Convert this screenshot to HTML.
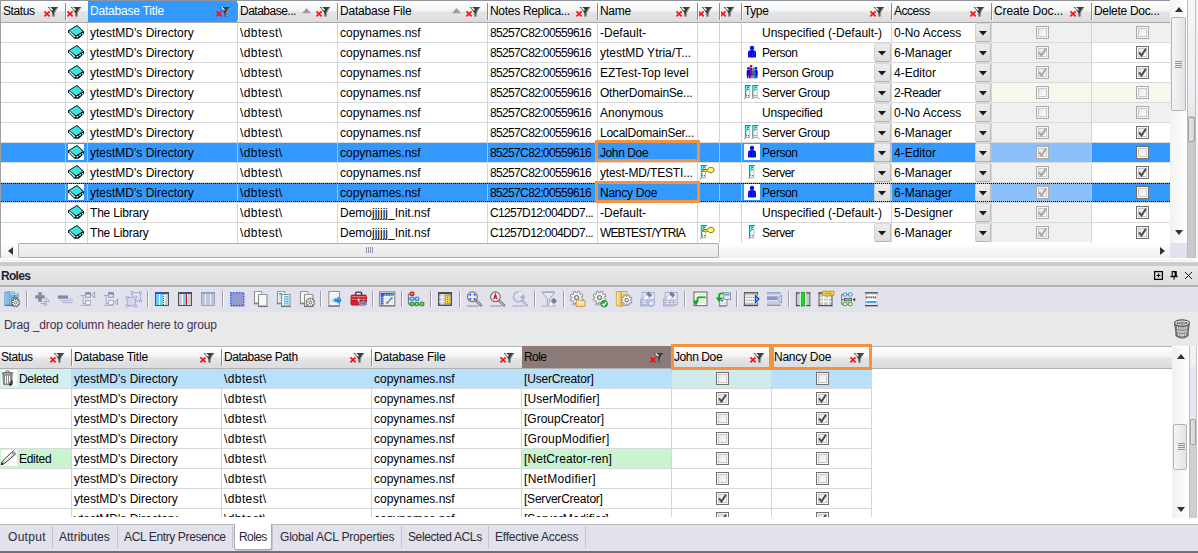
<!DOCTYPE html>
<html lang="en"><head><meta charset="utf-8"><title>Roles</title>
<style>
html,body{margin:0;padding:0}
body{width:1198px;height:553px;overflow:hidden;background:#fff;position:relative;font-family:"Liberation Sans",sans-serif;font-size:12px;color:#000;line-height:1}
div,span,svg{position:absolute;box-sizing:border-box}
svg{overflow:visible}
.t{white-space:pre;line-height:14px;height:14px}
.num{letter-spacing:-0.65px}
.hd{background:linear-gradient(#ffffff 0%,#f4f4f4 45%,#e4e4e6 55%,#dcdcde 100%)}
.vl{width:1px;background:#d6d6d6}
.hl{height:1px;background:#d9d9d9}
.hsep{width:1px;background:#8c8c8c}
.hsep2{width:1px;background:#fbfbfb}
.cb{width:13px;height:13px;border:1px solid #707070;background:#f6f6f6}
.cb i{position:absolute;box-sizing:border-box;left:1px;top:1px;width:9px;height:9px;border:1px solid #c9c9c9;background:linear-gradient(135deg,#e6e6e6,#fcfcfc)}
.dd{width:16px;background:linear-gradient(#ececec,#dcdcdc);border:1px solid;border-color:#d8d8d8 #bcbcbc #b4b4b4 #d0d0d0;border-radius:2px}
</style></head>
<body>
<div style="left:0px;top:0px;width:1170px;height:1px;background:#8f939b"></div>
<div class="hd" style="left:1px;top:1px;width:1169px;height:21px;"></div>
<div style="left:0px;top:22px;width:1170px;height:1px;background:#a9a9a9"></div>
<div style="left:88px;top:1px;width:149px;height:21px;background:#3399ff"></div>
<span class="t" style="left:3px;top:4px;letter-spacing:-0.4px;">Status</span>
<svg width="15" height="10" viewBox="0 0 15 10" style="left:44px;top:7px"><path d="M3.6 0H14.3L12.6 2.6L11.4 4.4L10.7 6.2L10.4 9.6H8.6L8.4 6.2L7.2 4.2L5.4 2Z" fill="#3c3c3c"/><path d="M13.4 0.6L11.2 4L10.2 6.4L10 9.2" stroke="#a8a8a8" stroke-width="0.9" fill="none"/><path d="M6 0.8L8 2.8" stroke="#fff" stroke-width="1.5" stroke-linecap="round"/><path d="M0.4 4.4L5.6 9.4M5.6 4.4L0.4 9.4" stroke="#ff0a0a" stroke-width="1.5"/></svg>
<svg width="15" height="10" viewBox="0 0 15 10" style="left:67px;top:7px"><path d="M3.6 0H14.3L12.6 2.6L11.4 4.4L10.7 6.2L10.4 9.6H8.6L8.4 6.2L7.2 4.2L5.4 2Z" fill="#3c3c3c"/><path d="M13.4 0.6L11.2 4L10.2 6.4L10 9.2" stroke="#a8a8a8" stroke-width="0.9" fill="none"/><path d="M6 0.8L8 2.8" stroke="#fff" stroke-width="1.5" stroke-linecap="round"/><path d="M0.4 4.4L5.6 9.4M5.6 4.4L0.4 9.4" stroke="#ff0a0a" stroke-width="1.5"/></svg>
<span class="t" style="left:90px;top:4px;color:#fff;letter-spacing:-0.2px;">Database Title</span>
<svg width="15" height="10" viewBox="0 0 15 10" style="left:216px;top:7px"><path d="M3.6 0H14.3L12.6 2.6L11.4 4.4L10.7 6.2L10.4 9.6H8.6L8.4 6.2L7.2 4.2L5.4 2Z" fill="#3c3c3c"/><path d="M13.4 0.6L11.2 4L10.2 6.4L10 9.2" stroke="#a8a8a8" stroke-width="0.9" fill="none"/><path d="M6 0.8L8 2.8" stroke="#fff" stroke-width="1.5" stroke-linecap="round"/><path d="M0.4 4.4L5.6 9.4M5.6 4.4L0.4 9.4" stroke="#ff0a0a" stroke-width="1.5"/></svg>
<span class="t" style="left:240px;top:4px;letter-spacing:-0.5px;">Database...</span>
<svg width="15" height="10" viewBox="0 0 15 10" style="left:316px;top:7px"><path d="M3.6 0H14.3L12.6 2.6L11.4 4.4L10.7 6.2L10.4 9.6H8.6L8.4 6.2L7.2 4.2L5.4 2Z" fill="#3c3c3c"/><path d="M13.4 0.6L11.2 4L10.2 6.4L10 9.2" stroke="#a8a8a8" stroke-width="0.9" fill="none"/><path d="M6 0.8L8 2.8" stroke="#fff" stroke-width="1.5" stroke-linecap="round"/><path d="M0.4 4.4L5.6 9.4M5.6 4.4L0.4 9.4" stroke="#ff0a0a" stroke-width="1.5"/></svg>
<svg width="9" height="5" viewBox="0 0 9 5" style="left:302px;top:8px"><path d="M0 5.2L4.5 0L9 5.2Z" fill="#9c9c9c"/></svg>
<span class="t" style="left:340px;top:4px;letter-spacing:-0.2px;">Database File</span>
<svg width="15" height="10" viewBox="0 0 15 10" style="left:466px;top:7px"><path d="M3.6 0H14.3L12.6 2.6L11.4 4.4L10.7 6.2L10.4 9.6H8.6L8.4 6.2L7.2 4.2L5.4 2Z" fill="#3c3c3c"/><path d="M13.4 0.6L11.2 4L10.2 6.4L10 9.2" stroke="#a8a8a8" stroke-width="0.9" fill="none"/><path d="M6 0.8L8 2.8" stroke="#fff" stroke-width="1.5" stroke-linecap="round"/><path d="M0.4 4.4L5.6 9.4M5.6 4.4L0.4 9.4" stroke="#ff0a0a" stroke-width="1.5"/></svg>
<svg width="9" height="5" viewBox="0 0 9 5" style="left:452px;top:8px"><path d="M0 5.2L4.5 0L9 5.2Z" fill="#9c9c9c"/></svg>
<span class="t" style="left:490px;top:4px;letter-spacing:-0.3px;">Notes Replica...</span>
<svg width="15" height="10" viewBox="0 0 15 10" style="left:576px;top:7px"><path d="M3.6 0H14.3L12.6 2.6L11.4 4.4L10.7 6.2L10.4 9.6H8.6L8.4 6.2L7.2 4.2L5.4 2Z" fill="#3c3c3c"/><path d="M13.4 0.6L11.2 4L10.2 6.4L10 9.2" stroke="#a8a8a8" stroke-width="0.9" fill="none"/><path d="M6 0.8L8 2.8" stroke="#fff" stroke-width="1.5" stroke-linecap="round"/><path d="M0.4 4.4L5.6 9.4M5.6 4.4L0.4 9.4" stroke="#ff0a0a" stroke-width="1.5"/></svg>
<span class="t" style="left:600px;top:4px;letter-spacing:-0.3px;">Name</span>
<svg width="15" height="10" viewBox="0 0 15 10" style="left:676px;top:7px"><path d="M3.6 0H14.3L12.6 2.6L11.4 4.4L10.7 6.2L10.4 9.6H8.6L8.4 6.2L7.2 4.2L5.4 2Z" fill="#3c3c3c"/><path d="M13.4 0.6L11.2 4L10.2 6.4L10 9.2" stroke="#a8a8a8" stroke-width="0.9" fill="none"/><path d="M6 0.8L8 2.8" stroke="#fff" stroke-width="1.5" stroke-linecap="round"/><path d="M0.4 4.4L5.6 9.4M5.6 4.4L0.4 9.4" stroke="#ff0a0a" stroke-width="1.5"/></svg>
<svg width="15" height="10" viewBox="0 0 15 10" style="left:698px;top:7px"><path d="M3.6 0H14.3L12.6 2.6L11.4 4.4L10.7 6.2L10.4 9.6H8.6L8.4 6.2L7.2 4.2L5.4 2Z" fill="#3c3c3c"/><path d="M13.4 0.6L11.2 4L10.2 6.4L10 9.2" stroke="#a8a8a8" stroke-width="0.9" fill="none"/><path d="M6 0.8L8 2.8" stroke="#fff" stroke-width="1.5" stroke-linecap="round"/><path d="M0.4 4.4L5.6 9.4M5.6 4.4L0.4 9.4" stroke="#ff0a0a" stroke-width="1.5"/></svg>
<svg width="15" height="10" viewBox="0 0 15 10" style="left:720px;top:7px"><path d="M3.6 0H14.3L12.6 2.6L11.4 4.4L10.7 6.2L10.4 9.6H8.6L8.4 6.2L7.2 4.2L5.4 2Z" fill="#3c3c3c"/><path d="M13.4 0.6L11.2 4L10.2 6.4L10 9.2" stroke="#a8a8a8" stroke-width="0.9" fill="none"/><path d="M6 0.8L8 2.8" stroke="#fff" stroke-width="1.5" stroke-linecap="round"/><path d="M0.4 4.4L5.6 9.4M5.6 4.4L0.4 9.4" stroke="#ff0a0a" stroke-width="1.5"/></svg>
<span class="t" style="left:744px;top:4px;letter-spacing:-0.4px;">Type</span>
<svg width="15" height="10" viewBox="0 0 15 10" style="left:870px;top:7px"><path d="M3.6 0H14.3L12.6 2.6L11.4 4.4L10.7 6.2L10.4 9.6H8.6L8.4 6.2L7.2 4.2L5.4 2Z" fill="#3c3c3c"/><path d="M13.4 0.6L11.2 4L10.2 6.4L10 9.2" stroke="#a8a8a8" stroke-width="0.9" fill="none"/><path d="M6 0.8L8 2.8" stroke="#fff" stroke-width="1.5" stroke-linecap="round"/><path d="M0.4 4.4L5.6 9.4M5.6 4.4L0.4 9.4" stroke="#ff0a0a" stroke-width="1.5"/></svg>
<span class="t" style="left:894px;top:4px;letter-spacing:-0.5px;">Access</span>
<svg width="15" height="10" viewBox="0 0 15 10" style="left:970px;top:7px"><path d="M3.6 0H14.3L12.6 2.6L11.4 4.4L10.7 6.2L10.4 9.6H8.6L8.4 6.2L7.2 4.2L5.4 2Z" fill="#3c3c3c"/><path d="M13.4 0.6L11.2 4L10.2 6.4L10 9.2" stroke="#a8a8a8" stroke-width="0.9" fill="none"/><path d="M6 0.8L8 2.8" stroke="#fff" stroke-width="1.5" stroke-linecap="round"/><path d="M0.4 4.4L5.6 9.4M5.6 4.4L0.4 9.4" stroke="#ff0a0a" stroke-width="1.5"/></svg>
<span class="t" style="left:994px;top:4px;letter-spacing:-0.13px;">Create Doc...</span>
<svg width="15" height="10" viewBox="0 0 15 10" style="left:1070px;top:7px"><path d="M3.6 0H14.3L12.6 2.6L11.4 4.4L10.7 6.2L10.4 9.6H8.6L8.4 6.2L7.2 4.2L5.4 2Z" fill="#3c3c3c"/><path d="M13.4 0.6L11.2 4L10.2 6.4L10 9.2" stroke="#a8a8a8" stroke-width="0.9" fill="none"/><path d="M6 0.8L8 2.8" stroke="#fff" stroke-width="1.5" stroke-linecap="round"/><path d="M0.4 4.4L5.6 9.4M5.6 4.4L0.4 9.4" stroke="#ff0a0a" stroke-width="1.5"/></svg>
<span class="t" style="left:1094px;top:4px;letter-spacing:-0.3px;">Delete Doc...</span>
<div class="hsep" style="left:65px;top:3px;width:1px;height:17px;"></div>
<div class="hsep2" style="left:66px;top:3px;width:1px;height:17px;"></div>
<div class="hsep" style="left:337px;top:3px;width:1px;height:17px;"></div>
<div class="hsep2" style="left:338px;top:3px;width:1px;height:17px;"></div>
<div class="hsep" style="left:487px;top:3px;width:1px;height:17px;"></div>
<div class="hsep2" style="left:488px;top:3px;width:1px;height:17px;"></div>
<div class="hsep" style="left:597px;top:3px;width:1px;height:17px;"></div>
<div class="hsep2" style="left:598px;top:3px;width:1px;height:17px;"></div>
<div class="hsep" style="left:697px;top:3px;width:1px;height:17px;"></div>
<div class="hsep2" style="left:698px;top:3px;width:1px;height:17px;"></div>
<div class="hsep" style="left:719px;top:3px;width:1px;height:17px;"></div>
<div class="hsep2" style="left:720px;top:3px;width:1px;height:17px;"></div>
<div class="hsep" style="left:741px;top:3px;width:1px;height:17px;"></div>
<div class="hsep2" style="left:742px;top:3px;width:1px;height:17px;"></div>
<div class="hsep" style="left:891px;top:3px;width:1px;height:17px;"></div>
<div class="hsep2" style="left:892px;top:3px;width:1px;height:17px;"></div>
<div class="hsep" style="left:991px;top:3px;width:1px;height:17px;"></div>
<div class="hsep2" style="left:992px;top:3px;width:1px;height:17px;"></div>
<div class="hsep" style="left:1091px;top:3px;width:1px;height:17px;"></div>
<div class="hsep2" style="left:1092px;top:3px;width:1px;height:17px;"></div>
<div class="hsep" style="left:237px;top:3px;width:1px;height:17px;"></div>
<div class="hsep2" style="left:238px;top:3px;width:1px;height:17px;"></div>
<div style="left:992px;top:23px;width:99px;height:19px;background:#f0f0f0"></div>
<div style="left:1092px;top:23px;width:78px;height:19px;background:#f0f0f0"></div>
<div class="hl" style="left:1px;top:42px;width:1169px;height:1px;"></div>
<svg width="16" height="16" viewBox="0 0 16 16" style="left:68px;top:24px"><path d="M0 6.5L9.1 1L16 7.6V9.8L10.6 14.7H6.4L0 8.3Z" fill="#000"/><path d="M1.4 6.4L9 2.1L14.8 7.6L7.9 11.5Z" fill="#36e2e2"/><path d="M3 6.5h.8M5 5.5h.8M7 4.5h.8M9 3.6h.8M5 7.5h.8M7 6.5h.8M9 5.5h.8M11 4.9h.8M7 8.5h.8M9 7.5h.8M11 6.7h.8M13 7.5h.8M9 9.5h.8M11 8.6h.8" stroke="#8fcaca" stroke-width="0.8"/><path d="M1.1 7.5L7.2 12.9" stroke="#fff" stroke-width="1.1"/><path d="M0.9 8.5L6.7 13.8" stroke="#10e8e8" stroke-width="0.9"/><path d="M8.7 13L15.1 9.2" stroke="#fff" stroke-width="1.3" stroke-dasharray="1.9 1.1"/><path d="M8.3 14.1L10 13.2M14.2 10.6L15.4 9.8" stroke="#10d8d8" stroke-width="0.8"/></svg>
<span class="t" style="left:90px;top:26px;">ytestMD's Directory</span>
<span class="t" style="left:240px;top:26px;letter-spacing:0.4px;">\dbtest\</span>
<span class="t" style="left:340px;top:26px;">copynames.nsf</span>
<span class="t num" style="left:490px;top:26px;">85257C82:00559616</span>
<span class="t" style="left:600px;top:26px;">-Default-</span>
<span class="t" style="left:762px;top:26px;">Unspecified (-Default-)</span>
<span class="t" style="left:894px;top:26px;">0-No Access</span>
<div class="dd" style="left:975px;top:23px;height:19px;width:16px"><svg width="8" height="4" viewBox="0 0 8 4" style="left:3px;top:7px"><path d="M0 0H8L4 4.4Z" fill="#1a1a1a"/></svg></div>
<div class="cb" style="left:1036px;top:26px;border-color:#a9a9a9;"><i></i></div>
<div class="cb" style="left:1136px;top:26px;border-color:#a9a9a9;"><i></i></div>
<div style="left:992px;top:43px;width:99px;height:19px;background:#f0f0f0"></div>
<div class="hl" style="left:1px;top:62px;width:1169px;height:1px;"></div>
<svg width="16" height="16" viewBox="0 0 16 16" style="left:68px;top:44px"><path d="M0 6.5L9.1 1L16 7.6V9.8L10.6 14.7H6.4L0 8.3Z" fill="#000"/><path d="M1.4 6.4L9 2.1L14.8 7.6L7.9 11.5Z" fill="#36e2e2"/><path d="M3 6.5h.8M5 5.5h.8M7 4.5h.8M9 3.6h.8M5 7.5h.8M7 6.5h.8M9 5.5h.8M11 4.9h.8M7 8.5h.8M9 7.5h.8M11 6.7h.8M13 7.5h.8M9 9.5h.8M11 8.6h.8" stroke="#8fcaca" stroke-width="0.8"/><path d="M1.1 7.5L7.2 12.9" stroke="#fff" stroke-width="1.1"/><path d="M0.9 8.5L6.7 13.8" stroke="#10e8e8" stroke-width="0.9"/><path d="M8.7 13L15.1 9.2" stroke="#fff" stroke-width="1.3" stroke-dasharray="1.9 1.1"/><path d="M8.3 14.1L10 13.2M14.2 10.6L15.4 9.8" stroke="#10d8d8" stroke-width="0.8"/></svg>
<span class="t" style="left:90px;top:46px;">ytestMD's Directory</span>
<span class="t" style="left:240px;top:46px;letter-spacing:0.4px;">\dbtest\</span>
<span class="t" style="left:340px;top:46px;">copynames.nsf</span>
<span class="t num" style="left:490px;top:46px;">85257C82:00559616</span>
<span class="t" style="left:600px;top:46px;">ytestMD Ytria/T...</span>
<svg width="16" height="16" viewBox="0 0 16 16" style="left:744px;top:44px"><circle cx="8" cy="3.9" r="2.2" fill="#0808e6"/><path d="M4 8.6Q4 6.3 6.4 6.3H9.6Q12 6.3 12 8.6V12.4Q12 13.6 10.8 13.6H5.2Q4 13.6 4 12.4Z" fill="#0808e6"/><rect x="7" y="5.4" width="2" height="1.4" fill="#0808e6"/><path d="M4.8 8.5h.8M4.8 10.5h.8M4.8 12.5h.8M8 9.5h.8M10 8.5h.8M10 10.5h.8M10 12.5h.8M8 11.5h.8" stroke="#2f6fd0" stroke-width="0.8"/></svg>
<span class="t" style="left:762px;top:46px;letter-spacing:-0.4px;">Person</span>
<div class="dd" style="left:874px;top:43px;height:19px;width:17px"><svg width="8" height="4" viewBox="0 0 8 4" style="left:3px;top:7px"><path d="M0 0H8L4 4.4Z" fill="#1a1a1a"/></svg></div>
<span class="t" style="left:894px;top:46px;">6-Manager</span>
<div class="dd" style="left:975px;top:43px;height:19px;width:16px"><svg width="8" height="4" viewBox="0 0 8 4" style="left:3px;top:7px"><path d="M0 0H8L4 4.4Z" fill="#1a1a1a"/></svg></div>
<div class="cb" style="left:1036px;top:46px;border-color:#a9a9a9;"><i></i><svg width="13" height="13" viewBox="0 0 13 13" style="left:-1px;top:-1px"><path d="M3.1 6.4 L5.5 9.5 L9.9 2.7" fill="none" stroke="#a2a2a2" stroke-width="2"/></svg></div>
<div class="cb" style="left:1136px;top:46px;"><i></i><svg width="13" height="13" viewBox="0 0 13 13" style="left:-1px;top:-1px"><path d="M3.1 6.4 L5.5 9.5 L9.9 2.7" fill="none" stroke="#4a4a4a" stroke-width="2"/></svg></div>
<div style="left:992px;top:63px;width:99px;height:19px;background:#f0f0f0"></div>
<div class="hl" style="left:1px;top:82px;width:1169px;height:1px;"></div>
<svg width="16" height="16" viewBox="0 0 16 16" style="left:68px;top:64px"><path d="M0 6.5L9.1 1L16 7.6V9.8L10.6 14.7H6.4L0 8.3Z" fill="#000"/><path d="M1.4 6.4L9 2.1L14.8 7.6L7.9 11.5Z" fill="#36e2e2"/><path d="M3 6.5h.8M5 5.5h.8M7 4.5h.8M9 3.6h.8M5 7.5h.8M7 6.5h.8M9 5.5h.8M11 4.9h.8M7 8.5h.8M9 7.5h.8M11 6.7h.8M13 7.5h.8M9 9.5h.8M11 8.6h.8" stroke="#8fcaca" stroke-width="0.8"/><path d="M1.1 7.5L7.2 12.9" stroke="#fff" stroke-width="1.1"/><path d="M0.9 8.5L6.7 13.8" stroke="#10e8e8" stroke-width="0.9"/><path d="M8.7 13L15.1 9.2" stroke="#fff" stroke-width="1.3" stroke-dasharray="1.9 1.1"/><path d="M8.3 14.1L10 13.2M14.2 10.6L15.4 9.8" stroke="#10d8d8" stroke-width="0.8"/></svg>
<span class="t" style="left:90px;top:66px;">ytestMD's Directory</span>
<span class="t" style="left:240px;top:66px;letter-spacing:0.4px;">\dbtest\</span>
<span class="t" style="left:340px;top:66px;">copynames.nsf</span>
<span class="t num" style="left:490px;top:66px;">85257C82:00559616</span>
<span class="t" style="left:600px;top:66px;">EZTest-Top level</span>
<svg width="16" height="16" viewBox="0 0 16 16" style="left:744px;top:64px"><circle cx="4.5" cy="4.3" r="1.3" fill="#0a0ae0"/><path d="M2.7 7.6Q2.7 5.6 4.5 5.6Q6.3 5.6 6.3 7.6V10.799999999999999L5.8999999999999995 14.2H4.8V11.6H4.2V14.2H3.1L2.7 10.799999999999999Z" fill="#0a0ae0"/><circle cx="12" cy="4.3" r="1.3" fill="#0a0ae0"/><path d="M10.3 7.6Q10.3 5.6 12 5.6Q13.7 5.6 13.7 7.6V10.799999999999999L13.299999999999999 14.2H12.3V11.6H11.7V14.2H10.700000000000001L10.3 10.799999999999999Z" fill="#0a0ae0"/><circle cx="9.9" cy="4.7" r="1.3" fill="#088a8a"/><path d="M8.3 8.0Q8.3 6.0 9.9 6.0Q11.5 6.0 11.5 8.0V11.2L11.1 14.6H10.200000000000001V12.0H9.6V14.6H8.700000000000001L8.3 11.2Z" fill="#088a8a"/><circle cx="7.1" cy="2.3" r="1.3" fill="#8a0a8a"/><path d="M5.6 5.6Q5.6 3.6 7.1 3.6Q8.6 3.6 8.6 5.6V11.2L8.2 14.6H7.3999999999999995V12.0H6.8V14.6H6.0L5.6 11.2Z" fill="#8a0a8a"/><path d="M9.6 5.2h1" stroke="#20f0f0" stroke-width="1"/><path d="M12.4 12v1.6" stroke="#2a2aff" stroke-width="0.9"/></svg>
<span class="t" style="left:762px;top:66px;letter-spacing:-0.27px;">Person Group</span>
<div class="dd" style="left:874px;top:63px;height:19px;width:17px"><svg width="8" height="4" viewBox="0 0 8 4" style="left:3px;top:7px"><path d="M0 0H8L4 4.4Z" fill="#1a1a1a"/></svg></div>
<span class="t" style="left:894px;top:66px;">4-Editor</span>
<div class="dd" style="left:975px;top:63px;height:19px;width:16px"><svg width="8" height="4" viewBox="0 0 8 4" style="left:3px;top:7px"><path d="M0 0H8L4 4.4Z" fill="#1a1a1a"/></svg></div>
<div class="cb" style="left:1036px;top:66px;border-color:#a9a9a9;"><i></i><svg width="13" height="13" viewBox="0 0 13 13" style="left:-1px;top:-1px"><path d="M3.1 6.4 L5.5 9.5 L9.9 2.7" fill="none" stroke="#a2a2a2" stroke-width="2"/></svg></div>
<div class="cb" style="left:1136px;top:66px;"><i></i><svg width="13" height="13" viewBox="0 0 13 13" style="left:-1px;top:-1px"><path d="M3.1 6.4 L5.5 9.5 L9.9 2.7" fill="none" stroke="#4a4a4a" stroke-width="2"/></svg></div>
<div style="left:992px;top:83px;width:99px;height:19px;background:#f7f7ee"></div>
<div style="left:1092px;top:83px;width:78px;height:19px;background:#f7f7ee"></div>
<div class="hl" style="left:1px;top:102px;width:1169px;height:1px;"></div>
<svg width="16" height="16" viewBox="0 0 16 16" style="left:68px;top:84px"><path d="M0 6.5L9.1 1L16 7.6V9.8L10.6 14.7H6.4L0 8.3Z" fill="#000"/><path d="M1.4 6.4L9 2.1L14.8 7.6L7.9 11.5Z" fill="#36e2e2"/><path d="M3 6.5h.8M5 5.5h.8M7 4.5h.8M9 3.6h.8M5 7.5h.8M7 6.5h.8M9 5.5h.8M11 4.9h.8M7 8.5h.8M9 7.5h.8M11 6.7h.8M13 7.5h.8M9 9.5h.8M11 8.6h.8" stroke="#8fcaca" stroke-width="0.8"/><path d="M1.1 7.5L7.2 12.9" stroke="#fff" stroke-width="1.1"/><path d="M0.9 8.5L6.7 13.8" stroke="#10e8e8" stroke-width="0.9"/><path d="M8.7 13L15.1 9.2" stroke="#fff" stroke-width="1.3" stroke-dasharray="1.9 1.1"/><path d="M8.3 14.1L10 13.2M14.2 10.6L15.4 9.8" stroke="#10d8d8" stroke-width="0.8"/></svg>
<span class="t" style="left:90px;top:86px;">ytestMD's Directory</span>
<span class="t" style="left:240px;top:86px;letter-spacing:0.4px;">\dbtest\</span>
<span class="t" style="left:340px;top:86px;">copynames.nsf</span>
<span class="t num" style="left:490px;top:86px;">85257C82:00559616</span>
<span class="t" style="left:600px;top:86px;letter-spacing:-0.23px;">OtherDomainSe...</span>
<svg width="16" height="16" viewBox="0 0 16 16" style="left:744px;top:84px"><rect x="1.4" y="1.7000000000000002" width="4.4" height="11.9" fill="#fff"/><path d="M1.4 1.7000000000000002V13.7" stroke="#6a6a6a" stroke-width="1"/><path d="M5.800000000000001 2.7V13.7" stroke="#b4b4b4" stroke-width="0.9"/><path d="M0.9 1.6H6.9" stroke="#0a8686" stroke-width="1"/><path d="M1.9 2.1H6.1000000000000005L5.1000000000000005 3.1H1.9Z" fill="#1ee8e8"/><path d="M2.9 3.6H5.1000000000000005M2.9 5.6H5.1000000000000005" stroke="#0a8080" stroke-width="1"/><path d="M1.9 4.6H4.1000000000000005M1.9 6.6H3.5M1.9 7.6H3.1M1.9 9.6H3.1" stroke="#22e6e6" stroke-width="1"/><path d="M2.1 11.6H3.1M4.1000000000000005 11.6H5.1000000000000005" stroke="#0a8080" stroke-width="1.2"/><path d="M1.3 13.7H5.9" stroke="#9a9a9a" stroke-width="0.9"/><rect x="0.30000000000000004" y="14.1" width="0.9" height="0.9" fill="#555"/><rect x="8.8" y="1.7000000000000002" width="4.4" height="11.9" fill="#fff"/><path d="M8.8 1.7000000000000002V13.7" stroke="#6a6a6a" stroke-width="1"/><path d="M13.200000000000001 2.7V13.7" stroke="#b4b4b4" stroke-width="0.9"/><path d="M8.3 1.6H14.3" stroke="#0a8686" stroke-width="1"/><path d="M9.3 2.1H13.5L12.5 3.1H9.3Z" fill="#1ee8e8"/><path d="M10.3 3.6H12.5M10.3 5.6H12.5" stroke="#0a8080" stroke-width="1"/><path d="M9.3 4.6H11.5M9.3 6.6H10.9M9.3 7.6H10.5M9.3 9.6H10.5" stroke="#22e6e6" stroke-width="1"/><path d="M9.5 11.6H10.5M11.5 11.6H12.5" stroke="#0a8080" stroke-width="1.2"/><path d="M8.700000000000001 13.7H13.3" stroke="#9a9a9a" stroke-width="0.9"/><rect x="7.700000000000001" y="14.1" width="0.9" height="0.9" fill="#555"/><rect x="14.2" y="14.1" width="0.9" height="0.9" fill="#555"/></svg>
<span class="t" style="left:762px;top:86px;letter-spacing:-0.37px;">Server Group</span>
<div class="dd" style="left:874px;top:83px;height:19px;width:17px"><svg width="8" height="4" viewBox="0 0 8 4" style="left:3px;top:7px"><path d="M0 0H8L4 4.4Z" fill="#1a1a1a"/></svg></div>
<span class="t" style="left:894px;top:86px;letter-spacing:-0.4px;">2-Reader</span>
<div class="dd" style="left:975px;top:83px;height:19px;width:16px"><svg width="8" height="4" viewBox="0 0 8 4" style="left:3px;top:7px"><path d="M0 0H8L4 4.4Z" fill="#1a1a1a"/></svg></div>
<div class="cb" style="left:1036px;top:86px;border-color:#a9a9a9;"><i></i></div>
<div class="cb" style="left:1136px;top:86px;border-color:#a9a9a9;"><i></i></div>
<div style="left:992px;top:103px;width:99px;height:19px;background:#f0f0f0"></div>
<div style="left:1092px;top:103px;width:78px;height:19px;background:#f0f0f0"></div>
<div class="hl" style="left:1px;top:122px;width:1169px;height:1px;"></div>
<svg width="16" height="16" viewBox="0 0 16 16" style="left:68px;top:104px"><path d="M0 6.5L9.1 1L16 7.6V9.8L10.6 14.7H6.4L0 8.3Z" fill="#000"/><path d="M1.4 6.4L9 2.1L14.8 7.6L7.9 11.5Z" fill="#36e2e2"/><path d="M3 6.5h.8M5 5.5h.8M7 4.5h.8M9 3.6h.8M5 7.5h.8M7 6.5h.8M9 5.5h.8M11 4.9h.8M7 8.5h.8M9 7.5h.8M11 6.7h.8M13 7.5h.8M9 9.5h.8M11 8.6h.8" stroke="#8fcaca" stroke-width="0.8"/><path d="M1.1 7.5L7.2 12.9" stroke="#fff" stroke-width="1.1"/><path d="M0.9 8.5L6.7 13.8" stroke="#10e8e8" stroke-width="0.9"/><path d="M8.7 13L15.1 9.2" stroke="#fff" stroke-width="1.3" stroke-dasharray="1.9 1.1"/><path d="M8.3 14.1L10 13.2M14.2 10.6L15.4 9.8" stroke="#10d8d8" stroke-width="0.8"/></svg>
<span class="t" style="left:90px;top:106px;">ytestMD's Directory</span>
<span class="t" style="left:240px;top:106px;letter-spacing:0.4px;">\dbtest\</span>
<span class="t" style="left:340px;top:106px;">copynames.nsf</span>
<span class="t num" style="left:490px;top:106px;">85257C82:00559616</span>
<span class="t" style="left:600px;top:106px;">Anonymous</span>
<span class="t" style="left:762px;top:106px;letter-spacing:-0.2px;">Unspecified</span>
<div class="dd" style="left:874px;top:103px;height:19px;width:17px"><svg width="8" height="4" viewBox="0 0 8 4" style="left:3px;top:7px"><path d="M0 0H8L4 4.4Z" fill="#1a1a1a"/></svg></div>
<span class="t" style="left:894px;top:106px;">0-No Access</span>
<div class="dd" style="left:975px;top:103px;height:19px;width:16px"><svg width="8" height="4" viewBox="0 0 8 4" style="left:3px;top:7px"><path d="M0 0H8L4 4.4Z" fill="#1a1a1a"/></svg></div>
<div class="cb" style="left:1036px;top:106px;border-color:#a9a9a9;"><i></i></div>
<div class="cb" style="left:1136px;top:106px;border-color:#a9a9a9;"><i></i></div>
<div style="left:992px;top:123px;width:99px;height:19px;background:#f0f0f0"></div>
<div class="hl" style="left:1px;top:142px;width:1169px;height:1px;"></div>
<svg width="16" height="16" viewBox="0 0 16 16" style="left:68px;top:124px"><path d="M0 6.5L9.1 1L16 7.6V9.8L10.6 14.7H6.4L0 8.3Z" fill="#000"/><path d="M1.4 6.4L9 2.1L14.8 7.6L7.9 11.5Z" fill="#36e2e2"/><path d="M3 6.5h.8M5 5.5h.8M7 4.5h.8M9 3.6h.8M5 7.5h.8M7 6.5h.8M9 5.5h.8M11 4.9h.8M7 8.5h.8M9 7.5h.8M11 6.7h.8M13 7.5h.8M9 9.5h.8M11 8.6h.8" stroke="#8fcaca" stroke-width="0.8"/><path d="M1.1 7.5L7.2 12.9" stroke="#fff" stroke-width="1.1"/><path d="M0.9 8.5L6.7 13.8" stroke="#10e8e8" stroke-width="0.9"/><path d="M8.7 13L15.1 9.2" stroke="#fff" stroke-width="1.3" stroke-dasharray="1.9 1.1"/><path d="M8.3 14.1L10 13.2M14.2 10.6L15.4 9.8" stroke="#10d8d8" stroke-width="0.8"/></svg>
<span class="t" style="left:90px;top:126px;">ytestMD's Directory</span>
<span class="t" style="left:240px;top:126px;letter-spacing:0.4px;">\dbtest\</span>
<span class="t" style="left:340px;top:126px;">copynames.nsf</span>
<span class="t num" style="left:490px;top:126px;">85257C82:00559616</span>
<span class="t" style="left:600px;top:126px;letter-spacing:-0.24px;">LocalDomainSer...</span>
<svg width="16" height="16" viewBox="0 0 16 16" style="left:744px;top:124px"><rect x="1.4" y="1.7000000000000002" width="4.4" height="11.9" fill="#fff"/><path d="M1.4 1.7000000000000002V13.7" stroke="#6a6a6a" stroke-width="1"/><path d="M5.800000000000001 2.7V13.7" stroke="#b4b4b4" stroke-width="0.9"/><path d="M0.9 1.6H6.9" stroke="#0a8686" stroke-width="1"/><path d="M1.9 2.1H6.1000000000000005L5.1000000000000005 3.1H1.9Z" fill="#1ee8e8"/><path d="M2.9 3.6H5.1000000000000005M2.9 5.6H5.1000000000000005" stroke="#0a8080" stroke-width="1"/><path d="M1.9 4.6H4.1000000000000005M1.9 6.6H3.5M1.9 7.6H3.1M1.9 9.6H3.1" stroke="#22e6e6" stroke-width="1"/><path d="M2.1 11.6H3.1M4.1000000000000005 11.6H5.1000000000000005" stroke="#0a8080" stroke-width="1.2"/><path d="M1.3 13.7H5.9" stroke="#9a9a9a" stroke-width="0.9"/><rect x="0.30000000000000004" y="14.1" width="0.9" height="0.9" fill="#555"/><rect x="8.8" y="1.7000000000000002" width="4.4" height="11.9" fill="#fff"/><path d="M8.8 1.7000000000000002V13.7" stroke="#6a6a6a" stroke-width="1"/><path d="M13.200000000000001 2.7V13.7" stroke="#b4b4b4" stroke-width="0.9"/><path d="M8.3 1.6H14.3" stroke="#0a8686" stroke-width="1"/><path d="M9.3 2.1H13.5L12.5 3.1H9.3Z" fill="#1ee8e8"/><path d="M10.3 3.6H12.5M10.3 5.6H12.5" stroke="#0a8080" stroke-width="1"/><path d="M9.3 4.6H11.5M9.3 6.6H10.9M9.3 7.6H10.5M9.3 9.6H10.5" stroke="#22e6e6" stroke-width="1"/><path d="M9.5 11.6H10.5M11.5 11.6H12.5" stroke="#0a8080" stroke-width="1.2"/><path d="M8.700000000000001 13.7H13.3" stroke="#9a9a9a" stroke-width="0.9"/><rect x="7.700000000000001" y="14.1" width="0.9" height="0.9" fill="#555"/><rect x="14.2" y="14.1" width="0.9" height="0.9" fill="#555"/></svg>
<span class="t" style="left:762px;top:126px;letter-spacing:-0.37px;">Server Group</span>
<div class="dd" style="left:874px;top:123px;height:19px;width:17px"><svg width="8" height="4" viewBox="0 0 8 4" style="left:3px;top:7px"><path d="M0 0H8L4 4.4Z" fill="#1a1a1a"/></svg></div>
<span class="t" style="left:894px;top:126px;">6-Manager</span>
<div class="dd" style="left:975px;top:123px;height:19px;width:16px"><svg width="8" height="4" viewBox="0 0 8 4" style="left:3px;top:7px"><path d="M0 0H8L4 4.4Z" fill="#1a1a1a"/></svg></div>
<div class="cb" style="left:1036px;top:126px;border-color:#a9a9a9;"><i></i><svg width="13" height="13" viewBox="0 0 13 13" style="left:-1px;top:-1px"><path d="M3.1 6.4 L5.5 9.5 L9.9 2.7" fill="none" stroke="#a2a2a2" stroke-width="2"/></svg></div>
<div class="cb" style="left:1136px;top:126px;"><i></i><svg width="13" height="13" viewBox="0 0 13 13" style="left:-1px;top:-1px"><path d="M3.1 6.4 L5.5 9.5 L9.9 2.7" fill="none" stroke="#4a4a4a" stroke-width="2"/></svg></div>
<div style="left:1px;top:143px;width:1169px;height:19px;background:#3399ff"></div>
<div style="left:992px;top:143px;width:99px;height:19px;background:#8cc0fb"></div>
<div class="hl" style="left:1px;top:162px;width:1169px;height:1px;"></div>
<div style="left:68px;top:144px;width:16px;height:16px;background:#fff"></div>
<svg width="16" height="16" viewBox="0 0 16 16" style="left:68px;top:144px"><path d="M0 6.5L9.1 1L16 7.6V9.8L10.6 14.7H6.4L0 8.3Z" fill="#000"/><path d="M1.4 6.4L9 2.1L14.8 7.6L7.9 11.5Z" fill="#36e2e2"/><path d="M3 6.5h.8M5 5.5h.8M7 4.5h.8M9 3.6h.8M5 7.5h.8M7 6.5h.8M9 5.5h.8M11 4.9h.8M7 8.5h.8M9 7.5h.8M11 6.7h.8M13 7.5h.8M9 9.5h.8M11 8.6h.8" stroke="#8fcaca" stroke-width="0.8"/><path d="M1.1 7.5L7.2 12.9" stroke="#fff" stroke-width="1.1"/><path d="M0.9 8.5L6.7 13.8" stroke="#10e8e8" stroke-width="0.9"/><path d="M8.7 13L15.1 9.2" stroke="#fff" stroke-width="1.3" stroke-dasharray="1.9 1.1"/><path d="M8.3 14.1L10 13.2M14.2 10.6L15.4 9.8" stroke="#10d8d8" stroke-width="0.8"/></svg>
<span class="t" style="left:90px;top:146px;">ytestMD's Directory</span>
<span class="t" style="left:240px;top:146px;letter-spacing:0.4px;">\dbtest\</span>
<span class="t" style="left:340px;top:146px;">copynames.nsf</span>
<span class="t num" style="left:490px;top:146px;">85257C82:00559616</span>
<span class="t" style="left:600px;top:146px;letter-spacing:-0.4px;">John Doe</span>
<div style="left:744px;top:144px;width:16px;height:16px;background:#fff"></div>
<svg width="16" height="16" viewBox="0 0 16 16" style="left:744px;top:144px"><circle cx="8" cy="3.9" r="2.2" fill="#0808e6"/><path d="M4 8.6Q4 6.3 6.4 6.3H9.6Q12 6.3 12 8.6V12.4Q12 13.6 10.8 13.6H5.2Q4 13.6 4 12.4Z" fill="#0808e6"/><rect x="7" y="5.4" width="2" height="1.4" fill="#0808e6"/><path d="M4.8 8.5h.8M4.8 10.5h.8M4.8 12.5h.8M8 9.5h.8M10 8.5h.8M10 10.5h.8M10 12.5h.8M8 11.5h.8" stroke="#2f6fd0" stroke-width="0.8"/></svg>
<span class="t" style="left:762px;top:146px;letter-spacing:-0.4px;">Person</span>
<div class="dd" style="left:874px;top:143px;height:19px;width:17px"><svg width="8" height="4" viewBox="0 0 8 4" style="left:3px;top:7px"><path d="M0 0H8L4 4.4Z" fill="#1a1a1a"/></svg></div>
<span class="t" style="left:894px;top:146px;">4-Editor</span>
<div class="dd" style="left:975px;top:143px;height:19px;width:16px"><svg width="8" height="4" viewBox="0 0 8 4" style="left:3px;top:7px"><path d="M0 0H8L4 4.4Z" fill="#1a1a1a"/></svg></div>
<div class="cb" style="left:1036px;top:146px;border-color:#a9a9a9;"><i></i><svg width="13" height="13" viewBox="0 0 13 13" style="left:-1px;top:-1px"><path d="M3.1 6.4 L5.5 9.5 L9.9 2.7" fill="none" stroke="#a2a2a2" stroke-width="2"/></svg></div>
<div class="cb" style="left:1136px;top:146px;"><i></i></div>
<div style="left:992px;top:163px;width:99px;height:19px;background:#f0f0f0"></div>
<div class="hl" style="left:1px;top:182px;width:1169px;height:1px;"></div>
<svg width="16" height="16" viewBox="0 0 16 16" style="left:68px;top:164px"><path d="M0 6.5L9.1 1L16 7.6V9.8L10.6 14.7H6.4L0 8.3Z" fill="#000"/><path d="M1.4 6.4L9 2.1L14.8 7.6L7.9 11.5Z" fill="#36e2e2"/><path d="M3 6.5h.8M5 5.5h.8M7 4.5h.8M9 3.6h.8M5 7.5h.8M7 6.5h.8M9 5.5h.8M11 4.9h.8M7 8.5h.8M9 7.5h.8M11 6.7h.8M13 7.5h.8M9 9.5h.8M11 8.6h.8" stroke="#8fcaca" stroke-width="0.8"/><path d="M1.1 7.5L7.2 12.9" stroke="#fff" stroke-width="1.1"/><path d="M0.9 8.5L6.7 13.8" stroke="#10e8e8" stroke-width="0.9"/><path d="M8.7 13L15.1 9.2" stroke="#fff" stroke-width="1.3" stroke-dasharray="1.9 1.1"/><path d="M8.3 14.1L10 13.2M14.2 10.6L15.4 9.8" stroke="#10d8d8" stroke-width="0.8"/></svg>
<span class="t" style="left:90px;top:166px;">ytestMD's Directory</span>
<span class="t" style="left:240px;top:166px;letter-spacing:0.4px;">\dbtest\</span>
<span class="t" style="left:340px;top:166px;">copynames.nsf</span>
<span class="t num" style="left:490px;top:166px;">85257C82:00559616</span>
<span class="t" style="left:600px;top:166px;letter-spacing:-0.15px;">ytest-MD/TESTI...</span>
<svg width="16" height="16" viewBox="0 0 16 16" style="left:700px;top:164px"><rect x="1.3" y="1.7000000000000002" width="4.4" height="11.9" fill="#fff"/><path d="M1.3 1.7000000000000002V13.7" stroke="#6a6a6a" stroke-width="1"/><path d="M5.7 2.7V13.7" stroke="#b4b4b4" stroke-width="0.9"/><path d="M0.8 1.6H6.8" stroke="#0a8686" stroke-width="1"/><path d="M1.8 2.1H6.0L5.0 3.1H1.8Z" fill="#1ee8e8"/><path d="M2.8 3.6H5.0M2.8 5.6H5.0" stroke="#0a8080" stroke-width="1"/><path d="M1.8 4.6H4.0M1.8 6.6H3.4000000000000004M1.8 7.6H3.0M1.8 9.6H3.0" stroke="#22e6e6" stroke-width="1"/><path d="M2.0 11.6H3.0M4.0 11.6H5.0" stroke="#0a8080" stroke-width="1.2"/><path d="M1.2000000000000002 13.7H5.8" stroke="#9a9a9a" stroke-width="0.9"/><rect x="0.20000000000000007" y="14.1" width="0.9" height="0.9" fill="#555"/><path d="M2.8 5.6H7.6Q8.2 3.4 10.8 3.2Q13.8 3.4 14.2 5.8Q13.8 8.6 11 8.8Q9 8.8 8.2 7.4H6.6L5.8 8.2L4.8 7.4H2.8Z" fill="#fdf32a" stroke="#8a5a12" stroke-width="0.9"/><path d="M9.4 4.6h1M11.4 4.6h1M10.4 6h1M12.4 6h1M9.4 7.4h1M11.4 7.4h1M8.4 6h1" stroke="#fffbd0" stroke-width="0.9"/></svg>
<svg width="16" height="16" viewBox="0 0 16 16" style="left:744px;top:164px"><rect x="5.5" y="1.7000000000000002" width="4.4" height="11.9" fill="#fff"/><path d="M5.5 1.7000000000000002V13.7" stroke="#6a6a6a" stroke-width="1"/><path d="M9.9 2.7V13.7" stroke="#b4b4b4" stroke-width="0.9"/><path d="M5 1.6H11" stroke="#0a8686" stroke-width="1"/><path d="M6 2.1H10.2L9.2 3.1H6Z" fill="#1ee8e8"/><path d="M7 3.6H9.2M7 5.6H9.2" stroke="#0a8080" stroke-width="1"/><path d="M6 4.6H8.2M6 6.6H7.6M6 7.6H7.2M6 9.6H7.2" stroke="#22e6e6" stroke-width="1"/><path d="M6.2 11.6H7.2M8.2 11.6H9.2" stroke="#0a8080" stroke-width="1.2"/><path d="M5.4 13.7H10" stroke="#9a9a9a" stroke-width="0.9"/><rect x="4.4" y="14.1" width="0.9" height="0.9" fill="#555"/></svg>
<span class="t" style="left:762px;top:166px;letter-spacing:-0.5px;">Server</span>
<div class="dd" style="left:874px;top:163px;height:19px;width:17px"><svg width="8" height="4" viewBox="0 0 8 4" style="left:3px;top:7px"><path d="M0 0H8L4 4.4Z" fill="#1a1a1a"/></svg></div>
<span class="t" style="left:894px;top:166px;">6-Manager</span>
<div class="dd" style="left:975px;top:163px;height:19px;width:16px"><svg width="8" height="4" viewBox="0 0 8 4" style="left:3px;top:7px"><path d="M0 0H8L4 4.4Z" fill="#1a1a1a"/></svg></div>
<div class="cb" style="left:1036px;top:166px;border-color:#a9a9a9;"><i></i><svg width="13" height="13" viewBox="0 0 13 13" style="left:-1px;top:-1px"><path d="M3.1 6.4 L5.5 9.5 L9.9 2.7" fill="none" stroke="#a2a2a2" stroke-width="2"/></svg></div>
<div class="cb" style="left:1136px;top:166px;"><i></i><svg width="13" height="13" viewBox="0 0 13 13" style="left:-1px;top:-1px"><path d="M3.1 6.4 L5.5 9.5 L9.9 2.7" fill="none" stroke="#4a4a4a" stroke-width="2"/></svg></div>
<div style="left:1px;top:183px;width:1169px;height:19px;background:#3399ff"></div>
<div style="left:992px;top:183px;width:99px;height:19px;background:#8cc0fb"></div>
<div class="hl" style="left:1px;top:202px;width:1169px;height:1px;"></div>
<div style="left:68px;top:184px;width:16px;height:16px;background:#fff"></div>
<svg width="16" height="16" viewBox="0 0 16 16" style="left:68px;top:184px"><path d="M0 6.5L9.1 1L16 7.6V9.8L10.6 14.7H6.4L0 8.3Z" fill="#000"/><path d="M1.4 6.4L9 2.1L14.8 7.6L7.9 11.5Z" fill="#36e2e2"/><path d="M3 6.5h.8M5 5.5h.8M7 4.5h.8M9 3.6h.8M5 7.5h.8M7 6.5h.8M9 5.5h.8M11 4.9h.8M7 8.5h.8M9 7.5h.8M11 6.7h.8M13 7.5h.8M9 9.5h.8M11 8.6h.8" stroke="#8fcaca" stroke-width="0.8"/><path d="M1.1 7.5L7.2 12.9" stroke="#fff" stroke-width="1.1"/><path d="M0.9 8.5L6.7 13.8" stroke="#10e8e8" stroke-width="0.9"/><path d="M8.7 13L15.1 9.2" stroke="#fff" stroke-width="1.3" stroke-dasharray="1.9 1.1"/><path d="M8.3 14.1L10 13.2M14.2 10.6L15.4 9.8" stroke="#10d8d8" stroke-width="0.8"/></svg>
<span class="t" style="left:90px;top:186px;">ytestMD's Directory</span>
<span class="t" style="left:240px;top:186px;letter-spacing:0.4px;">\dbtest\</span>
<span class="t" style="left:340px;top:186px;">copynames.nsf</span>
<span class="t num" style="left:490px;top:186px;">85257C82:00559616</span>
<span class="t" style="left:600px;top:186px;letter-spacing:-0.25px;">Nancy Doe</span>
<div style="left:744px;top:184px;width:16px;height:16px;background:#fff"></div>
<svg width="16" height="16" viewBox="0 0 16 16" style="left:744px;top:184px"><circle cx="8" cy="3.9" r="2.2" fill="#0808e6"/><path d="M4 8.6Q4 6.3 6.4 6.3H9.6Q12 6.3 12 8.6V12.4Q12 13.6 10.8 13.6H5.2Q4 13.6 4 12.4Z" fill="#0808e6"/><rect x="7" y="5.4" width="2" height="1.4" fill="#0808e6"/><path d="M4.8 8.5h.8M4.8 10.5h.8M4.8 12.5h.8M8 9.5h.8M10 8.5h.8M10 10.5h.8M10 12.5h.8M8 11.5h.8" stroke="#2f6fd0" stroke-width="0.8"/></svg>
<span class="t" style="left:762px;top:186px;letter-spacing:-0.4px;">Person</span>
<div class="dd" style="left:874px;top:183px;height:19px;width:17px"><svg width="8" height="4" viewBox="0 0 8 4" style="left:3px;top:7px"><path d="M0 0H8L4 4.4Z" fill="#1a1a1a"/></svg></div>
<span class="t" style="left:894px;top:186px;">6-Manager</span>
<div class="dd" style="left:975px;top:183px;height:19px;width:16px"><svg width="8" height="4" viewBox="0 0 8 4" style="left:3px;top:7px"><path d="M0 0H8L4 4.4Z" fill="#1a1a1a"/></svg></div>
<div class="cb" style="left:1036px;top:186px;border-color:#a9a9a9;"><i></i><svg width="13" height="13" viewBox="0 0 13 13" style="left:-1px;top:-1px"><path d="M3.1 6.4 L5.5 9.5 L9.9 2.7" fill="none" stroke="#a2a2a2" stroke-width="2"/></svg></div>
<div class="cb" style="left:1136px;top:186px;"><i></i></div>
<div style="left:992px;top:203px;width:99px;height:19px;background:#f0f0f0"></div>
<div class="hl" style="left:1px;top:222px;width:1169px;height:1px;"></div>
<svg width="16" height="16" viewBox="0 0 16 16" style="left:68px;top:204px"><path d="M0 6.5L9.1 1L16 7.6V9.8L10.6 14.7H6.4L0 8.3Z" fill="#000"/><path d="M1.4 6.4L9 2.1L14.8 7.6L7.9 11.5Z" fill="#36e2e2"/><path d="M3 6.5h.8M5 5.5h.8M7 4.5h.8M9 3.6h.8M5 7.5h.8M7 6.5h.8M9 5.5h.8M11 4.9h.8M7 8.5h.8M9 7.5h.8M11 6.7h.8M13 7.5h.8M9 9.5h.8M11 8.6h.8" stroke="#8fcaca" stroke-width="0.8"/><path d="M1.1 7.5L7.2 12.9" stroke="#fff" stroke-width="1.1"/><path d="M0.9 8.5L6.7 13.8" stroke="#10e8e8" stroke-width="0.9"/><path d="M8.7 13L15.1 9.2" stroke="#fff" stroke-width="1.3" stroke-dasharray="1.9 1.1"/><path d="M8.3 14.1L10 13.2M14.2 10.6L15.4 9.8" stroke="#10d8d8" stroke-width="0.8"/></svg>
<span class="t" style="left:90px;top:206px;letter-spacing:-0.2px;">The Library</span>
<span class="t" style="left:240px;top:206px;letter-spacing:0.4px;">\dbtest\</span>
<span class="t" style="left:340px;top:206px;">Demojjjjjj_Init.nsf</span>
<span class="t num" style="left:490px;top:206px;">C1257D12:004DD7...</span>
<span class="t" style="left:600px;top:206px;">-Default-</span>
<span class="t" style="left:762px;top:206px;">Unspecified (-Default-)</span>
<span class="t" style="left:894px;top:206px;">5-Designer</span>
<div class="dd" style="left:975px;top:203px;height:19px;width:16px"><svg width="8" height="4" viewBox="0 0 8 4" style="left:3px;top:7px"><path d="M0 0H8L4 4.4Z" fill="#1a1a1a"/></svg></div>
<div class="cb" style="left:1036px;top:206px;border-color:#a9a9a9;"><i></i><svg width="13" height="13" viewBox="0 0 13 13" style="left:-1px;top:-1px"><path d="M3.1 6.4 L5.5 9.5 L9.9 2.7" fill="none" stroke="#a2a2a2" stroke-width="2"/></svg></div>
<div class="cb" style="left:1136px;top:206px;"><i></i><svg width="13" height="13" viewBox="0 0 13 13" style="left:-1px;top:-1px"><path d="M3.1 6.4 L5.5 9.5 L9.9 2.7" fill="none" stroke="#4a4a4a" stroke-width="2"/></svg></div>
<div style="left:992px;top:223px;width:99px;height:19px;background:#f0f0f0"></div>
<svg width="16" height="16" viewBox="0 0 16 16" style="left:68px;top:224px"><path d="M0 6.5L9.1 1L16 7.6V9.8L10.6 14.7H6.4L0 8.3Z" fill="#000"/><path d="M1.4 6.4L9 2.1L14.8 7.6L7.9 11.5Z" fill="#36e2e2"/><path d="M3 6.5h.8M5 5.5h.8M7 4.5h.8M9 3.6h.8M5 7.5h.8M7 6.5h.8M9 5.5h.8M11 4.9h.8M7 8.5h.8M9 7.5h.8M11 6.7h.8M13 7.5h.8M9 9.5h.8M11 8.6h.8" stroke="#8fcaca" stroke-width="0.8"/><path d="M1.1 7.5L7.2 12.9" stroke="#fff" stroke-width="1.1"/><path d="M0.9 8.5L6.7 13.8" stroke="#10e8e8" stroke-width="0.9"/><path d="M8.7 13L15.1 9.2" stroke="#fff" stroke-width="1.3" stroke-dasharray="1.9 1.1"/><path d="M8.3 14.1L10 13.2M14.2 10.6L15.4 9.8" stroke="#10d8d8" stroke-width="0.8"/></svg>
<span class="t" style="left:90px;top:226px;letter-spacing:-0.2px;">The Library</span>
<span class="t" style="left:240px;top:226px;letter-spacing:0.4px;">\dbtest\</span>
<span class="t" style="left:340px;top:226px;">Demojjjjjj_Init.nsf</span>
<span class="t num" style="left:490px;top:226px;">C1257D12:004DD7...</span>
<span class="t" style="left:600px;top:226px;letter-spacing:-0.9px;">WEBTEST/YTRIA</span>
<svg width="16" height="16" viewBox="0 0 16 16" style="left:700px;top:224px"><rect x="1.3" y="1.7000000000000002" width="4.4" height="11.9" fill="#fff"/><path d="M1.3 1.7000000000000002V13.7" stroke="#6a6a6a" stroke-width="1"/><path d="M5.7 2.7V13.7" stroke="#b4b4b4" stroke-width="0.9"/><path d="M0.8 1.6H6.8" stroke="#0a8686" stroke-width="1"/><path d="M1.8 2.1H6.0L5.0 3.1H1.8Z" fill="#1ee8e8"/><path d="M2.8 3.6H5.0M2.8 5.6H5.0" stroke="#0a8080" stroke-width="1"/><path d="M1.8 4.6H4.0M1.8 6.6H3.4000000000000004M1.8 7.6H3.0M1.8 9.6H3.0" stroke="#22e6e6" stroke-width="1"/><path d="M2.0 11.6H3.0M4.0 11.6H5.0" stroke="#0a8080" stroke-width="1.2"/><path d="M1.2000000000000002 13.7H5.8" stroke="#9a9a9a" stroke-width="0.9"/><rect x="0.20000000000000007" y="14.1" width="0.9" height="0.9" fill="#555"/><path d="M2.8 5.6H7.6Q8.2 3.4 10.8 3.2Q13.8 3.4 14.2 5.8Q13.8 8.6 11 8.8Q9 8.8 8.2 7.4H6.6L5.8 8.2L4.8 7.4H2.8Z" fill="#fdf32a" stroke="#8a5a12" stroke-width="0.9"/><path d="M9.4 4.6h1M11.4 4.6h1M10.4 6h1M12.4 6h1M9.4 7.4h1M11.4 7.4h1M8.4 6h1" stroke="#fffbd0" stroke-width="0.9"/></svg>
<svg width="16" height="16" viewBox="0 0 16 16" style="left:744px;top:224px"><rect x="5.5" y="1.7000000000000002" width="4.4" height="11.9" fill="#fff"/><path d="M5.5 1.7000000000000002V13.7" stroke="#6a6a6a" stroke-width="1"/><path d="M9.9 2.7V13.7" stroke="#b4b4b4" stroke-width="0.9"/><path d="M5 1.6H11" stroke="#0a8686" stroke-width="1"/><path d="M6 2.1H10.2L9.2 3.1H6Z" fill="#1ee8e8"/><path d="M7 3.6H9.2M7 5.6H9.2" stroke="#0a8080" stroke-width="1"/><path d="M6 4.6H8.2M6 6.6H7.6M6 7.6H7.2M6 9.6H7.2" stroke="#22e6e6" stroke-width="1"/><path d="M6.2 11.6H7.2M8.2 11.6H9.2" stroke="#0a8080" stroke-width="1.2"/><path d="M5.4 13.7H10" stroke="#9a9a9a" stroke-width="0.9"/><rect x="4.4" y="14.1" width="0.9" height="0.9" fill="#555"/></svg>
<span class="t" style="left:762px;top:226px;letter-spacing:-0.5px;">Server</span>
<div class="dd" style="left:874px;top:223px;height:19px;width:17px"><svg width="8" height="4" viewBox="0 0 8 4" style="left:3px;top:7px"><path d="M0 0H8L4 4.4Z" fill="#1a1a1a"/></svg></div>
<span class="t" style="left:894px;top:226px;">6-Manager</span>
<div class="dd" style="left:975px;top:223px;height:19px;width:16px"><svg width="8" height="4" viewBox="0 0 8 4" style="left:3px;top:7px"><path d="M0 0H8L4 4.4Z" fill="#1a1a1a"/></svg></div>
<div class="cb" style="left:1036px;top:226px;border-color:#a9a9a9;"><i></i><svg width="13" height="13" viewBox="0 0 13 13" style="left:-1px;top:-1px"><path d="M3.1 6.4 L5.5 9.5 L9.9 2.7" fill="none" stroke="#a2a2a2" stroke-width="2"/></svg></div>
<div class="cb" style="left:1136px;top:226px;"><i></i><svg width="13" height="13" viewBox="0 0 13 13" style="left:-1px;top:-1px"><path d="M3.1 6.4 L5.5 9.5 L9.9 2.7" fill="none" stroke="#4a4a4a" stroke-width="2"/></svg></div>
<div class="vl" style="left:65px;top:23px;width:1px;height:220px;"></div>
<div class="vl" style="left:87px;top:23px;width:1px;height:220px;"></div>
<div class="vl" style="left:237px;top:23px;width:1px;height:220px;"></div>
<div class="vl" style="left:337px;top:23px;width:1px;height:220px;"></div>
<div class="vl" style="left:487px;top:23px;width:1px;height:220px;"></div>
<div class="vl" style="left:597px;top:23px;width:1px;height:220px;"></div>
<div class="vl" style="left:697px;top:23px;width:1px;height:220px;"></div>
<div class="vl" style="left:719px;top:23px;width:1px;height:220px;"></div>
<div class="vl" style="left:741px;top:23px;width:1px;height:220px;"></div>
<div class="vl" style="left:891px;top:23px;width:1px;height:220px;"></div>
<div class="vl" style="left:991px;top:23px;width:1px;height:220px;"></div>
<div class="vl" style="left:1091px;top:23px;width:1px;height:220px;"></div>
<div style="left:65px;top:143px;width:1px;height:19px;background:#9cc4ee"></div>
<div style="left:87px;top:143px;width:1px;height:19px;background:#9cc4ee"></div>
<div style="left:237px;top:143px;width:1px;height:19px;background:#9cc4ee"></div>
<div style="left:337px;top:143px;width:1px;height:19px;background:#9cc4ee"></div>
<div style="left:487px;top:143px;width:1px;height:19px;background:#9cc4ee"></div>
<div style="left:597px;top:143px;width:1px;height:19px;background:#9cc4ee"></div>
<div style="left:697px;top:143px;width:1px;height:19px;background:#9cc4ee"></div>
<div style="left:719px;top:143px;width:1px;height:19px;background:#9cc4ee"></div>
<div style="left:741px;top:143px;width:1px;height:19px;background:#9cc4ee"></div>
<div style="left:891px;top:143px;width:1px;height:19px;background:#9cc4ee"></div>
<div style="left:991px;top:143px;width:1px;height:19px;background:#9cc4ee"></div>
<div style="left:1091px;top:143px;width:1px;height:19px;background:#9cc4ee"></div>
<div style="left:65px;top:183px;width:1px;height:19px;background:#9cc4ee"></div>
<div style="left:87px;top:183px;width:1px;height:19px;background:#9cc4ee"></div>
<div style="left:237px;top:183px;width:1px;height:19px;background:#9cc4ee"></div>
<div style="left:337px;top:183px;width:1px;height:19px;background:#9cc4ee"></div>
<div style="left:487px;top:183px;width:1px;height:19px;background:#9cc4ee"></div>
<div style="left:597px;top:183px;width:1px;height:19px;background:#9cc4ee"></div>
<div style="left:697px;top:183px;width:1px;height:19px;background:#9cc4ee"></div>
<div style="left:719px;top:183px;width:1px;height:19px;background:#9cc4ee"></div>
<div style="left:741px;top:183px;width:1px;height:19px;background:#9cc4ee"></div>
<div style="left:891px;top:183px;width:1px;height:19px;background:#9cc4ee"></div>
<div style="left:991px;top:183px;width:1px;height:19px;background:#9cc4ee"></div>
<div style="left:1091px;top:183px;width:1px;height:19px;background:#9cc4ee"></div>
<div style="left:1px;top:183px;width:1169px;height:1px;background:repeating-linear-gradient(90deg,#000 0 1px,transparent 1px 2px)"></div>
<div style="left:1px;top:201px;width:1169px;height:1px;background:repeating-linear-gradient(90deg,#000 0 1px,transparent 1px 2px)"></div>
<div style="left:595px;top:140px;width:105px;height:22px;border:3px solid #f5923e"></div>
<div style="left:595px;top:181px;width:105px;height:22px;border:3px solid #f5923e"></div>
<div style="left:0px;top:0px;width:1px;height:258px;background:#a0a0a0"></div>
<div style="left:1px;top:243px;width:1169px;height:15px;background:linear-gradient(#ffffff,#efefef)"></div>
<div style="left:18px;top:243px;width:701px;height:15px;background:linear-gradient(#f2f2f2,#e8e8e8);border:1px solid #a4b0b0;border-radius:2px"></div>
<div style="left:366px;top:247px;width:1px;height:6px;background:#8890b8"></div>
<div style="left:368px;top:247px;width:1px;height:6px;background:#8890b8"></div>
<div style="left:370px;top:247px;width:1px;height:6px;background:#8890b8"></div>
<div style="left:372px;top:247px;width:1px;height:6px;background:#8890b8"></div>
<svg width="5" height="8" viewBox="0 0 5 8" style="left:8px;top:247px"><path d="M5 0V8L0 4Z" fill="#333"/></svg>
<svg width="5" height="8" viewBox="0 0 5 8" style="left:1160px;top:247px"><path d="M0 0V8L5 4Z" fill="#333"/></svg>
<div style="left:1170px;top:0px;width:17px;height:243px;background:linear-gradient(90deg,#f2f2f2,#ffffff)"></div>
<div style="left:1171px;top:17px;width:15px;height:94px;background:linear-gradient(90deg,#f4f4f4,#e4e4e6);border:1px solid #b4b4b4;border-radius:2px"></div>
<div style="left:1175px;top:61px;width:7px;height:1px;background:#8890c8"></div>
<div style="left:1175px;top:63px;width:7px;height:1px;background:#8890c8"></div>
<div style="left:1175px;top:65px;width:7px;height:1px;background:#8890c8"></div>
<div style="left:1175px;top:67px;width:7px;height:1px;background:#8890c8"></div>
<svg width="8" height="5" viewBox="0 0 8 5" style="left:1175px;top:7px"><path d="M0 5H8L4 0Z" fill="#333"/></svg>
<svg width="8" height="5" viewBox="0 0 8 5" style="left:1175px;top:230px"><path d="M0 0H8L4 5Z" fill="#333"/></svg>
<div style="left:1170px;top:243px;width:17px;height:15px;background:#e1e2ee"></div>
<div style="left:1187px;top:0px;width:9px;height:258px;background:linear-gradient(#f6f6f8 0,#ececf2 104px,#e8e8e8 104px,#e8e8e8 116px,#c9c9cb 116px);border-left:1px solid #bdbdbd;border-right:1px solid #bdbdbd"></div>
<div style="left:1188px;top:117px;width:7px;height:25px;background:linear-gradient(90deg,#e6e6e6,#d4d4d4);border:1px solid #9e9e9e;border-radius:2px"></div>
<div style="left:1196px;top:0px;width:2px;height:262px;background:#f4f4f4"></div>
<div style="left:0px;top:258px;width:1198px;height:4px;background:#fcfcfc"></div>
<div style="left:0px;top:260px;width:1196px;height:1px;background:#ececec"></div>
<div style="left:0px;top:262px;width:1198px;height:4px;background:#cbcbcb"></div>
<div style="left:0px;top:266px;width:1198px;height:20px;background:linear-gradient(#e9e9ec,#dddde0)"></div>
<div style="left:0px;top:285px;width:1198px;height:2px;background:#b2b2b2"></div>
<span class="t" style="left:1px;top:269px;font-weight:bold;color:#1e1e32;letter-spacing:-0.7px;">Roles</span>
<svg width="44" height="12" viewBox="0 0 44 12" style="left:1152px;top:269px"><rect x="2.6" y="2.6" width="7.8" height="7.8" fill="none" stroke="#000" stroke-width="1.25"/><path d="M4.5 6.5H8.5M6.5 4.5V8.5" stroke="#000" stroke-width="1.2"/><path d="M20.2 7V2.6H24V7" fill="none" stroke="#000" stroke-width="1.1"/><rect x="22.6" y="2.4" width="1.9" height="4.8" fill="#000"/><path d="M18.4 7.5H25.6" stroke="#000" stroke-width="1.3"/><path d="M22 8V10.6" stroke="#000" stroke-width="1.1"/><path d="M33 3L40 10M40 3L33 10" stroke="#111" stroke-width="0.95"/></svg>
<div style="left:0px;top:287px;width:1198px;height:25px;background:#e1e2ec"></div>
<svg width="16" height="16" viewBox="0 0 16 16" style="left:4px;top:291px"><path d="M0.6 14.6H9" stroke="#5a5a5a" stroke-width="0.9"/><path d="M0.8 1.4L5.6 0.5V13.6L0.8 14.2Z" fill="#7ebdea" stroke="#4a88bc" stroke-width="0.7"/><path d="M1.8 2V13.4" stroke="#b4b8e4" stroke-width="1.2"/><rect x="5.4" y="1" width="5.2" height="12.6" fill="#b6d8f2" stroke="#6a9cca" stroke-width="0.7"/><rect x="6.3" y="2.8" width="8.3" height="10" fill="#fdfdfd" stroke="#8aa0b8" stroke-width="0.8"/><rect x="7.2" y="3.8" width="6.5" height="8" fill="#2a8ce4"/><path d="M8 5.2h2M11 5.2h2M8 7.6h2M11 7.6h2" stroke="#86ccf8" stroke-width="1.3"/><path d="M14.49 11.98L15.71 12.47L15.09 13.96L13.88 13.44L13.34 13.98L13.86 15.19L12.37 15.81L11.88 14.59L11.12 14.59L10.63 15.81L9.14 15.19L9.66 13.98L9.12 13.44L7.91 13.96L7.29 12.47L8.51 11.98L8.51 11.22L7.29 10.73L7.91 9.24L9.12 9.76L9.66 9.22L9.14 8.01L10.63 7.39L11.12 8.61L11.88 8.61L12.37 7.39L13.86 8.01L13.34 9.22L13.88 9.76L15.09 9.24L15.71 10.73L14.49 11.22Z" fill="#fafafa" stroke="#4e4e4e" stroke-width="0.9" stroke-linejoin="round"/><circle cx="11.5" cy="11.6" r="1.29" fill="#fff" stroke="#2a6a5a" stroke-width="0.86"/></svg>
<div style="left:26px;top:291px;width:1px;height:16px;background:#9c9ca6"></div>
<div style="left:27px;top:291px;width:1px;height:16px;background:#fbfbfd"></div>
<svg width="16" height="16" viewBox="0 0 16 16" style="left:34px;top:291px"><path d="M12.9 6.4V8.7H11M14.8 8.4V10.6H8.6M11.4 10.8V12.5H6.4M12.6 12.6V14.1H9.2" fill="none" stroke="#9fa6cc" stroke-width="0.9"/><path d="M4.2 1.2H7.8V4.2H10.8V7.6H7.8V10.8H4.2V7.6H1.2V4.2H4.2Z" fill="#858a9e"/></svg>
<svg width="16" height="16" viewBox="0 0 16 16" style="left:57px;top:291px"><path d="M3.4 9.6H13V6.6M5.4 11.6H15V8.4" fill="none" stroke="#9fa6cc" stroke-width="0.9"/><rect x="0.8" y="4.4" width="10.2" height="3.4" fill="#858a9e"/></svg>
<svg width="16" height="16" viewBox="0 0 16 16" style="left:80px;top:291px"><path d="M0.6 4.5H5M3 4.5V12.5H6M0.6 14.4H11" fill="none" stroke="#9fa6cc" stroke-width="0.9"/><rect x="5.6" y="1.6" width="4.8" height="4.6" fill="#e9ebf5" stroke="#858a9e" stroke-width="0.9"/><rect x="6" y="2" width="4" height="1.6" fill="#858a9e"/><rect x="5.6" y="9.6" width="4.8" height="4.2" fill="#f2f3fa" stroke="#9fa6cc" stroke-width="0.9"/><path d="M14.6 1V7L11.6 4Z" fill="#e4e6f2" stroke="#858a9e" stroke-width="0.8"/></svg>
<svg width="16" height="16" viewBox="0 0 16 16" style="left:103px;top:291px"><path d="M0.6 4.5H5M3 4.5V12.5H6M0.6 14.4H11" fill="none" stroke="#9fa6cc" stroke-width="0.9"/><rect x="5.6" y="1.6" width="4.8" height="4.6" fill="#e9ebf5" stroke="#858a9e" stroke-width="0.9"/><rect x="6" y="2" width="4" height="1.6" fill="#858a9e"/><rect x="5.6" y="9.6" width="4.8" height="4.2" fill="#f2f3fa" stroke="#9fa6cc" stroke-width="0.9"/><path d="M14.6 8V14L11.6 11Z" fill="#e4e6f2" stroke="#858a9e" stroke-width="0.8"/></svg>
<svg width="16" height="16" viewBox="0 0 16 16" style="left:126px;top:291px"><rect x="6" y="1.6" width="8.4" height="8.4" fill="#dfe2f0" stroke="#9fa6cc" stroke-width="0.9"/><rect x="1.2" y="6.4" width="8.4" height="8.4" fill="#d4d8ea" stroke="#9fa6cc" stroke-width="0.9"/><circle cx="6" cy="1.6" r="1.3" fill="#e6e8f4" stroke="#8f97c4" stroke-width="0.8"/><circle cx="14.4" cy="1.6" r="1.3" fill="#e6e8f4" stroke="#8f97c4" stroke-width="0.8"/><circle cx="14.4" cy="10" r="1.3" fill="#e6e8f4" stroke="#8f97c4" stroke-width="0.8"/><circle cx="1.2" cy="6.4" r="1.3" fill="#e6e8f4" stroke="#8f97c4" stroke-width="0.8"/><circle cx="9.6" cy="6.4" r="1.3" fill="#e6e8f4" stroke="#8f97c4" stroke-width="0.8"/><circle cx="1.2" cy="14.8" r="1.3" fill="#e6e8f4" stroke="#8f97c4" stroke-width="0.8"/><circle cx="9.6" cy="14.8" r="1.3" fill="#e6e8f4" stroke="#8f97c4" stroke-width="0.8"/></svg>
<div style="left:147px;top:291px;width:1px;height:16px;background:#9c9ca6"></div>
<div style="left:148px;top:291px;width:1px;height:16px;background:#fbfbfd"></div>
<svg width="16" height="16" viewBox="0 0 16 16" style="left:155px;top:291px"><rect x="0.5" y="1.5" width="13" height="13" fill="#fff" stroke="#505050" stroke-width="1"/><rect x="0" y="1" width="9" height="2" fill="#1f57e0"/><rect x="9" y="1" width="5" height="2" fill="#505050"/><rect x="1" y="3" width="3" height="11" fill="#74cdf0"/><rect x="5" y="3" width="3" height="11" fill="#74cdf0"/><rect x="10" y="3" width="3" height="11" fill="#d0d0d0"/><path d="M8.5 3V14" stroke="#e81010" stroke-width="1" stroke-dasharray="1 1"/></svg>
<svg width="16" height="16" viewBox="0 0 16 16" style="left:178px;top:291px"><rect x="0.5" y="1.5" width="13" height="13" fill="#fff" stroke="#505050" stroke-width="1"/><rect x="0" y="1" width="5" height="2" fill="#505050"/><rect x="5" y="1" width="4" height="2" fill="#1f57e0"/><rect x="9" y="1" width="5" height="2" fill="#505050"/><rect x="1" y="3" width="3" height="11" fill="#cdcdcd"/><rect x="5" y="3" width="3" height="11" fill="#74cdf0"/><rect x="10" y="3" width="3" height="11" fill="#cdcdcd"/><rect x="8" y="3" width="1" height="11" fill="#d81010"/></svg>
<svg width="16" height="16" viewBox="0 0 16 16" style="left:201px;top:291px"><rect x="0.5" y="1.5" width="13" height="13" fill="#f3f4fa" stroke="#98a0c6" stroke-width="1"/><rect x="1" y="2" width="12" height="1" fill="#98a0c6"/><rect x="1" y="3" width="3" height="11" fill="#bcc3dc"/><rect x="5" y="3" width="4" height="11" fill="#bcc3dc"/><rect x="10" y="3" width="3" height="11" fill="#bcc3dc"/></svg>
<div style="left:222px;top:291px;width:1px;height:16px;background:#9c9ca6"></div>
<div style="left:223px;top:291px;width:1px;height:16px;background:#fbfbfd"></div>
<svg width="16" height="16" viewBox="0 0 16 16" style="left:230px;top:291px"><path d="M0.6 15.2H14.4" stroke="#8e909c" stroke-width="0.8"/><rect x="0.7" y="1.7" width="13.2" height="12.8" fill="#909dcd" stroke="#2444e4" stroke-width="1" stroke-dasharray="1.7 1"/></svg>
<svg width="16" height="16" viewBox="0 0 16 16" style="left:253px;top:291px"><path d="M0.8 12.7H6" stroke="#6e6e6e" stroke-width="1.1"/><path d="M5 15.5H14.6" stroke="#6e6e6e" stroke-width="1.1"/><rect x="1.4" y="0.7" width="7.4" height="11.4" fill="#f1f6f4" stroke="#808080" stroke-width="0.9"/><path d="M2.2 1.6H8V11.2" fill="none" stroke="#fff" stroke-width="0.8"/><rect x="5.6" y="3.7" width="8.4" height="11.3" fill="#f3f8f6" stroke="#7a7a7a" stroke-width="0.9"/><path d="M6.5 4.6H13.2" stroke="#fff" stroke-width="0.8"/></svg>
<svg width="16" height="16" viewBox="0 0 16 16" style="left:276px;top:291px"><path d="M0.8 12.7H6" stroke="#6e6e6e" stroke-width="1.1"/><path d="M5 15.5H14.6" stroke="#6e6e6e" stroke-width="1.1"/><rect x="1.4" y="0.7" width="7.4" height="11.4" fill="#f1f6f4" stroke="#808080" stroke-width="0.9"/><path d="M2.2 1.6H8V11.2" fill="none" stroke="#fff" stroke-width="0.8"/><rect x="5.6" y="3.7" width="8.4" height="11.3" fill="#f3f8f6" stroke="#7a7a7a" stroke-width="0.9"/><path d="M6.5 4.6H13.2" stroke="#fff" stroke-width="0.8"/><rect x="3" y="2" width="3" height="1.6" fill="#2aa2f0"/><path d="M3.2 5.2h1.6M3.2 7.4h1.6M3.2 9.6h1.6" stroke="#c4c4c4" stroke-width="1"/><rect x="8.4" y="5.2" width="4" height="9" fill="#29b0f6"/><rect x="9.2" y="6.2" width="2.4" height="1.4" fill="#e4f5fd"/><rect x="9.2" y="8.6" width="2.4" height="1.4" fill="#e4f5fd"/><rect x="9.2" y="11" width="2.4" height="1.4" fill="#e4f5fd"/><rect x="9.2" y="12.9" width="2.4" height="1" fill="#e4f5fd"/></svg>
<svg width="16" height="16" viewBox="0 0 16 16" style="left:299px;top:291px"><path d="M0.8 12.7H6" stroke="#6e6e6e" stroke-width="1.1"/><path d="M5 15.5H14.6" stroke="#6e6e6e" stroke-width="1.1"/><rect x="1.4" y="0.7" width="7.4" height="11.4" fill="#f1f6f4" stroke="#808080" stroke-width="0.9"/><path d="M2.2 1.6H8V11.2" fill="none" stroke="#fff" stroke-width="0.8"/><rect x="5.6" y="3.7" width="8.4" height="11.3" fill="#f3f8f6" stroke="#7a7a7a" stroke-width="0.9"/><path d="M6.5 4.6H13.2" stroke="#fff" stroke-width="0.8"/><path d="M14.53 11.79L15.81 12.31L15.16 13.87L13.89 13.33L13.33 13.89L13.87 15.16L12.31 15.81L11.79 14.53L11.01 14.53L10.49 15.81L8.93 15.16L9.47 13.89L8.91 13.33L7.64 13.87L6.99 12.31L8.27 11.79L8.27 11.01L6.99 10.49L7.64 8.93L8.91 9.47L9.47 8.91L8.93 7.64L10.49 6.99L11.01 8.27L11.79 8.27L12.31 6.99L13.87 7.64L13.33 8.91L13.89 9.47L15.16 8.93L15.81 10.49L14.53 11.01Z" fill="#f4f4f4" stroke="#6c6c6c" stroke-width="0.9" stroke-linejoin="round"/><circle cx="11.4" cy="11.4" r="1.35" fill="#fff" stroke="#5e5e5e" stroke-width="0.90"/></svg>
<div style="left:320px;top:291px;width:1px;height:16px;background:#9c9ca6"></div>
<div style="left:321px;top:291px;width:1px;height:16px;background:#fbfbfd"></div>
<svg width="16" height="16" viewBox="0 0 16 16" style="left:328px;top:291px"><path d="M0 15.2H11.6" stroke="#6e6e6e" stroke-width="1.1"/><rect x="0.9" y="0.6" width="10.6" height="14" fill="#f1f6f4" stroke="#858585" stroke-width="0.9"/><path d="M1.8 1.5H10.6" stroke="#fff" stroke-width="0.8"/><path d="M6.2 7.4H9.6V5.6Q13.4 7.4 13.5 9.2Q13.4 11 9.6 12.8V11H6.2Z" fill="#1c8cf0"/><path d="M4.6 8.2H7M4.6 10.2H7M3.8 9.2H6" stroke="#74c4fa" stroke-width="1"/><path d="M9.8 7.4Q11.6 8 12 9" fill="none" stroke="#5ab8fa" stroke-width="0.9"/></svg>
<svg width="16" height="16" viewBox="0 0 16 16" style="left:351px;top:291px"><path d="M4.6 4.4V2.6Q4.6 1.1 6 1.1H9.2Q10.6 1.1 10.6 2.6V4.4" fill="none" stroke="#34343c" stroke-width="1.4"/><rect x="0" y="4.1" width="15.4" height="10" rx="1.1" fill="#d6202a" stroke="#a01018" stroke-width="0.8"/><path d="M0.6 5.6H14.8" stroke="#ec6a70" stroke-width="1.2"/><path d="M0.4 8.6H15" stroke="#f0848a" stroke-width="0.9"/><path d="M0.4 9.6H15" stroke="#9c1018" stroke-width="0.9"/><rect x="6.6" y="7.6" width="2.2" height="3" fill="#e8e8e8" stroke="#777" stroke-width="0.5"/><path d="M8.6 11.2H12V9.4L15.8 12.4L12 15.4V13.6H8.6Z" fill="#2a8ae4" stroke="#cfe4fa" stroke-width="0.5"/></svg>
<div style="left:372px;top:291px;width:1px;height:16px;background:#9c9ca6"></div>
<div style="left:373px;top:291px;width:1px;height:16px;background:#fbfbfd"></div>
<svg width="16" height="16" viewBox="0 0 16 16" style="left:380px;top:291px"><path d="M-0.6 14.9H15.2" stroke="#7a7a7a" stroke-width="1.4"/><rect x="-0.4" y="0.9" width="15.2" height="13.6" fill="#f6f5ee" stroke="#858585" stroke-width="1.1"/><path d="M6 5V13.6M9 5V13.6M12 5V13.6M3.6 8H14M3.6 11H14" stroke="#e4e2d4" stroke-width="0.7"/><rect x="0.8" y="2" width="13" height="2.6" fill="#2a52e0"/><rect x="0.8" y="2" width="2.6" height="11.6" fill="#2a52e0"/><path d="M4.4 3.3h1.6M7.2 3.3h1.6M10 3.3h1.6M12.4 3.3h1" stroke="#6ee0f0" stroke-width="1"/><path d="M2.1 6v1.2M2.1 8.4v1.2M2.1 10.8v1.2" stroke="#e8f0ff" stroke-width="1"/><path d="M7.2 11.8L11.6 7.2" stroke="#2a62e6" stroke-width="1.1"/><path d="M6.2 12.8L6.6 10.4L8.6 12.4ZM12.6 6.2L12.2 8.6L10.2 6.6Z" fill="#2a62e6"/></svg>
<div style="left:401px;top:291px;width:1px;height:16px;background:#9c9ca6"></div>
<div style="left:402px;top:291px;width:1px;height:16px;background:#fbfbfd"></div>
<svg width="16" height="16" viewBox="0 0 16 16" style="left:409px;top:291px"><path d="M1.2 3H-0.6V13.2H1.2M-0.6 8H1.4" fill="none" stroke="#4a6a5a" stroke-width="0.9"/><path d="M5 8H6.4M4.8 13.2H6.2M9.8 13.2H11.2" stroke="#2a6a3a" stroke-width="0.9"/><rect x="1.2" y="1.1" width="3.7" height="3.5" rx="0.7" fill="#dc2630" stroke="#a81018" stroke-width="0.8"/><rect x="2.2" y="2.2" width="1.7" height="1.1" fill="#ffffff" opacity="0.9"/><rect x="1.3" y="6.1" width="3.7" height="3.5" rx="0.7" fill="#48aef4" stroke="#2a86dc" stroke-width="0.8"/><rect x="2.3" y="7.199999999999999" width="1.7" height="1.1" fill="#ffffff" opacity="0.9"/><rect x="6.2" y="6.1" width="3.7" height="3.5" rx="0.7" fill="#48aef4" stroke="#2a86dc" stroke-width="0.8"/><rect x="7.2" y="7.199999999999999" width="1.7" height="1.1" fill="#ffffff" opacity="0.9"/><rect x="1.1" y="11.3" width="3.7" height="3.5" rx="0.7" fill="#46a828" stroke="#2a7a14" stroke-width="0.8"/><rect x="2.1" y="12.4" width="1.7" height="1.1" fill="#ffffff" opacity="0.9"/><rect x="6" y="11.3" width="3.7" height="3.5" rx="0.7" fill="#46a828" stroke="#2a7a14" stroke-width="0.8"/><rect x="7" y="12.4" width="1.7" height="1.1" fill="#ffffff" opacity="0.9"/><rect x="11.2" y="11.3" width="3.7" height="3.5" rx="0.7" fill="#46a828" stroke="#2a7a14" stroke-width="0.8"/><rect x="12.2" y="12.4" width="1.7" height="1.1" fill="#ffffff" opacity="0.9"/></svg>
<div style="left:430px;top:291px;width:1px;height:16px;background:#9c9ca6"></div>
<div style="left:431px;top:291px;width:1px;height:16px;background:#fbfbfd"></div>
<svg width="16" height="16" viewBox="0 0 16 16" style="left:438px;top:291px"><rect x="0.7" y="1.7" width="12.7" height="12.6" fill="#c9c9c9" stroke="#4c4c4c" stroke-width="1.3"/><rect x="1" y="1.4" width="12.2" height="1.6" fill="#4c4c4c"/><path d="M4.4 3V13.6M1.4 6.4H12.8M1.4 10.5H12.8" stroke="#fff" stroke-width="1.1"/><path d="M7.3 4.2H10.6L12 2.8V12.7H7.3Z" fill="#f2da4a" stroke="#c0902a" stroke-width="0.9" stroke-linejoin="round"/><path d="M10.6 4.2L12 2.8" stroke="#8a9a20" stroke-width="1"/><path d="M9 6.4h1.1M9 8.5h1.1M9 10.6h1.1" stroke="#5a78d8" stroke-width="1.1"/></svg>
<div style="left:459px;top:291px;width:1px;height:16px;background:#9c9ca6"></div>
<div style="left:460px;top:291px;width:1px;height:16px;background:#fbfbfd"></div>
<svg width="16" height="16" viewBox="0 0 16 16" style="left:467px;top:291px"><path d="M0.2 15H11.6" stroke="#8e8e8e" stroke-width="1"/><path d="M9.2 9.6L14 14.4" stroke="#6e6e6e" stroke-width="2.6" stroke-linecap="round"/><path d="M9.8 10.2L13.8 14.2" stroke="#f0f0f0" stroke-width="1" stroke-linecap="round"/><circle cx="5.4" cy="5.8" r="4.9" fill="#e8ecf4" stroke="#767676" stroke-width="1.2"/><path d="M3.1 4.7V3.5H4.3M6.5 3.5H7.7V4.7M7.7 6.9V8.1H6.5M4.3 8.1H3.1V6.9" fill="none" stroke="#1a3cf0" stroke-width="1.2"/></svg>
<svg width="16" height="16" viewBox="0 0 16 16" style="left:490px;top:291px"><path d="M0.2 15H11.6" stroke="#8e8e8e" stroke-width="1"/><path d="M9.2 9.6L14 14.4" stroke="#6e6e6e" stroke-width="2.6" stroke-linecap="round"/><path d="M9.8 10.2L13.8 14.2" stroke="#f0f0f0" stroke-width="1" stroke-linecap="round"/><circle cx="5.4" cy="5.8" r="4.9" fill="#f0e8ee" stroke="#767676" stroke-width="1.2"/><path d="M3.8 8.2L5.4 3.4L7 8.2M4.4 6.5H6.4" fill="none" stroke="#e01c2c" stroke-width="1.35"/></svg>
<svg width="16" height="16" viewBox="0 0 16 16" style="left:513px;top:291px"><path d="M-0.4 15H11" stroke="#9fa6cc" stroke-width="1"/><path d="M9.4 9.8L13.8 14.4" stroke="#9fa6cc" stroke-width="2.4" stroke-linecap="round"/><path d="M9.8 10.2L13.6 14.2" stroke="#e8eaf6" stroke-width="0.8" stroke-linecap="round"/><circle cx="5.4" cy="5.8" r="4.9" fill="#dde1f0" stroke="#9fa6cc" stroke-width="1.1"/><path d="M5.6 1.4Q9.8 2.4 9.8 6.4" fill="none" stroke="#f0f2fa" stroke-width="1.6"/><path d="M7 6.2H12.2M9.8 3.6V8.8" fill="none" stroke="#9fa6cc" stroke-width="1.3"/></svg>
<div style="left:534px;top:291px;width:1px;height:16px;background:#9c9ca6"></div>
<div style="left:535px;top:291px;width:1px;height:16px;background:#fbfbfd"></div>
<svg width="16" height="16" viewBox="0 0 16 16" style="left:542px;top:291px"><path d="M-0.6 15H14" stroke="#9fa6cc" stroke-width="0.9"/><path d="M0.4 0.8H12.4V2L7.4 8V13.6H5.4V8L0.4 2Z" fill="#dfe3f2" stroke="#9fa6cc" stroke-width="1"/><path d="M1 1.6H11.8" stroke="#98a0c8" stroke-width="0.9"/><path d="M2.4 3H10.4" stroke="#f2f4fb" stroke-width="1"/><path d="M11.8 6.8L15 10L11.8 13.2L8.6 10Z" fill="#757e9c"/><path d="M8.6 10L11.8 13.2L9.6 15.2H7.4L6.6 13Z" fill="#f6f7fc" stroke="#9fa6cc" stroke-width="0.6"/></svg>
<div style="left:563px;top:291px;width:1px;height:16px;background:#9c9ca6"></div>
<div style="left:564px;top:291px;width:1px;height:16px;background:#fbfbfd"></div>
<svg width="16" height="16" viewBox="0 0 16 16" style="left:571px;top:291px"><ellipse cx="5" cy="13.6" rx="4.6" ry="1" fill="#a8a8b0" opacity="0.7"/><path d="M10.18 7.18L12.06 7.94L11.12 10.22L9.25 9.43L8.43 10.25L9.22 12.12L6.94 13.06L6.18 11.18L5.02 11.18L4.26 13.06L1.98 12.12L2.77 10.25L1.95 9.43L0.08 10.22L-0.86 7.94L1.02 7.18L1.02 6.02L-0.86 5.26L0.08 2.98L1.95 3.77L2.77 2.95L1.98 1.08L4.26 0.14L5.02 2.02L6.18 2.02L6.94 0.14L9.22 1.08L8.43 2.95L9.25 3.77L11.12 2.98L12.06 5.26L10.18 6.02Z" fill="#fafafa" stroke="#868686" stroke-width="0.9" stroke-linejoin="round"/><circle cx="5.6" cy="6.6" r="1.98" fill="#fff" stroke="#7a7a7a" stroke-width="1.32"/><path d="M5.2 9H9.4L10.2 9.8H14V15.4H5.2Z" fill="#f6e2a0" stroke="#cf9030" stroke-width="0.9"/><path d="M5.8 11H13.6" stroke="#fbf2cc" stroke-width="1"/><path d="M11.8 9.2h2" stroke="#3ab0e8" stroke-width="0.9"/></svg>
<svg width="16" height="16" viewBox="0 0 16 16" style="left:594px;top:291px"><ellipse cx="5" cy="13.6" rx="4.6" ry="1" fill="#a8a8b0" opacity="0.7"/><path d="M10.18 7.18L12.06 7.94L11.12 10.22L9.25 9.43L8.43 10.25L9.22 12.12L6.94 13.06L6.18 11.18L5.02 11.18L4.26 13.06L1.98 12.12L2.77 10.25L1.95 9.43L0.08 10.22L-0.86 7.94L1.02 7.18L1.02 6.02L-0.86 5.26L0.08 2.98L1.95 3.77L2.77 2.95L1.98 1.08L4.26 0.14L5.02 2.02L6.18 2.02L6.94 0.14L9.22 1.08L8.43 2.95L9.25 3.77L11.12 2.98L12.06 5.26L10.18 6.02Z" fill="#fafafa" stroke="#868686" stroke-width="0.9" stroke-linejoin="round"/><circle cx="5.6" cy="6.6" r="1.98" fill="#fff" stroke="#7a7a7a" stroke-width="1.32"/><circle cx="10.2" cy="12.8" r="3.3" fill="#1fae3a" stroke="#0e7a20" stroke-width="0.6"/><path d="M8.4 12.8L9.8 14.4L12.2 11.2" fill="none" stroke="#fff" stroke-width="1.3"/></svg>
<svg width="16" height="16" viewBox="0 0 16 16" style="left:617px;top:291px"><path d="M-0.6 0.6H9.8V13.6L4.2 15.4L-0.6 14.4Z" fill="#ecd27a" stroke="#b8902a" stroke-width="0.8"/><path d="M4.2 1V15.2" stroke="#c09a34" stroke-width="0.9"/><path d="M0.4 1.6V13.8" stroke="#f8ecb8" stroke-width="1.2"/><path d="M5.2 1.4H9.2V6" fill="none" stroke="#f6e8b0" stroke-width="0.9"/><path d="M13.49 9.69L15.08 10.34L14.28 12.27L12.70 11.60L12.00 12.30L12.67 13.88L10.74 14.68L10.09 13.09L9.11 13.09L8.46 14.68L6.53 13.88L7.20 12.30L6.50 11.60L4.92 12.27L4.12 10.34L5.71 9.69L5.71 8.71L4.12 8.06L4.92 6.13L6.50 6.80L7.20 6.10L6.53 4.52L8.46 3.72L9.11 5.31L10.09 5.31L10.74 3.72L12.67 4.52L12.00 6.10L12.70 6.80L14.28 6.13L15.08 8.06L13.49 8.71Z" fill="#fafafa" stroke="#868686" stroke-width="0.9" stroke-linejoin="round"/><circle cx="9.6" cy="9.2" r="1.68" fill="#fff" stroke="#7a7a7a" stroke-width="1.12"/></svg>
<svg width="16" height="16" viewBox="0 0 16 16" style="left:640px;top:291px"><path d="M0.8 7.6V15H12.6" fill="none" stroke="#9fa6cc" stroke-width="1.2"/><rect x="2.2" y="1.4" width="12" height="12.4" fill="#e8eaf4" stroke="#9fa6cc" stroke-width="0.9"/><path d="M3.4 9.4H13M3.4 11.6H13M7 8V13M10.4 8V13" stroke="#9fa6cc" stroke-width="0.8"/><path d="M8.6 0.4L12.2 4L9.6 6.6L6 3Z" fill="#757e9c"/><path d="M6.2 3L9.6 6.4L6.6 9.2H4.4L3 7.4Z" fill="#f6f7fc" stroke="#9fa6cc" stroke-width="0.8"/><circle cx="11.4" cy="11.8" r="3.4" fill="#c9cee6" stroke="#9fa6cc" stroke-width="0.8"/><path d="M9.8 11.8L11 13.2L13.2 10.4" fill="none" stroke="#eef0f8" stroke-width="1.2"/></svg>
<svg width="16" height="16" viewBox="0 0 16 16" style="left:663px;top:291px"><path d="M0.8 7.6V15H12.6" fill="none" stroke="#9fa6cc" stroke-width="1.2"/><rect x="2.2" y="1.4" width="12" height="12.4" fill="#e8eaf4" stroke="#9fa6cc" stroke-width="0.9"/><path d="M3.4 9.4H13M3.4 11.6H13M7 8V13M10.4 8V13" stroke="#9fa6cc" stroke-width="0.8"/><path d="M8.6 0.4L12.2 4L9.6 6.6L6 3Z" fill="#757e9c"/><path d="M6.2 3L9.6 6.4L6.6 9.2H4.4L3 7.4Z" fill="#f6f7fc" stroke="#9fa6cc" stroke-width="0.8"/></svg>
<div style="left:684px;top:291px;width:1px;height:16px;background:#9c9ca6"></div>
<div style="left:685px;top:291px;width:1px;height:16px;background:#fbfbfd"></div>
<svg width="16" height="16" viewBox="0 0 16 16" style="left:692px;top:291px"><rect x="2" y="1" width="13" height="13.6" fill="#fbfbf6" stroke="#7a7a7a" stroke-width="1.2"/><path d="M3.4 3.4h2.4M7 3.4h2.4M10.6 3.4h2.4M8 9h2M11 9h2M8 11.6h2M11 11.6h2" stroke="#d9d9c8" stroke-width="1.4"/><path d="M13.6 6.2H7.4Q5.4 6.2 5.4 8.2V10" fill="none" stroke="#18b020" stroke-width="2"/><path d="M0.8 9.4H7L4 14.8Z" fill="#18a020"/><path d="M7.4 5.4H13.6" stroke="#7ae07a" stroke-width="0.7"/></svg>
<svg width="16" height="16" viewBox="0 0 16 16" style="left:715px;top:291px"><path d="M3.6 15.2H11.6" stroke="#7a7a7a" stroke-width="0.9"/><rect x="4.6" y="7.6" width="7.4" height="6.8" fill="#fafafa" stroke="#8a8a8a" stroke-width="1"/><rect x="5.6" y="8.6" width="2.6" height="2" fill="#2a9ae0"/><path d="M5.8 12.4h2M8.8 12.4h2" stroke="#d4d4d4" stroke-width="1.2"/><rect x="8.8" y="1.8" width="6.6" height="6.6" fill="#fafafa" stroke="#8a8a8a" stroke-width="1"/><rect x="9.6" y="2.8" width="5" height="1.8" fill="#39b0f4"/><path d="M9.8 6.2h1.8M12.4 6.2h1.8" stroke="#d4d4d4" stroke-width="1.2"/><path d="M8.6 2.4H6.4Q4 2.4 4 5V7" fill="none" stroke="#18b020" stroke-width="1.9"/><path d="M0.8 6.4H7.2L4 11.2Z" fill="#18a020"/></svg>
<div style="left:736px;top:291px;width:1px;height:16px;background:#9c9ca6"></div>
<div style="left:737px;top:291px;width:1px;height:16px;background:#fbfbfd"></div>
<svg width="16" height="16" viewBox="0 0 16 16" style="left:744px;top:291px"><rect x="0.4" y="2" width="13" height="12.4" fill="#fff"/><rect x="0.4" y="2" width="13" height="2.4" fill="#c6c6c6"/><rect x="0.4" y="11.4" width="13" height="2.6" fill="#c6c6c6"/><path d="M0 1.7H13.8" stroke="#4e4e4e" stroke-width="1.2"/><path d="M-0.4 14.5H13.8" stroke="#4e4e4e" stroke-width="1.3"/><path d="M0.4 1.2V15M13.4 1.2V4.4M13.4 11.6V15" stroke="#4e4e4e" stroke-width="0.9"/><path d="M1.6 6.3H11M1.6 9.2H11" stroke="#3a3a3a" stroke-width="1.1" stroke-dasharray="0.9 1"/><path d="M11.4 4.4L15 8L11.4 11.6Z" fill="#56c6f8" stroke="#1a34d6" stroke-width="1.1" stroke-linejoin="round"/></svg>
<svg width="16" height="16" viewBox="0 0 16 16" style="left:767px;top:291px"><rect x="0" y="1.2" width="13.6" height="13.8" fill="#c6cde2"/><rect x="0" y="1.2" width="13.6" height="1.1" fill="#8e98bc"/><rect x="0" y="13.6" width="13.6" height="1.4" fill="#8e98bc"/><rect x="0" y="4.5" width="13.6" height="0.8" fill="#f4f5fa"/><rect x="0" y="9.2" width="13.6" height="0.9" fill="#f4f5fa"/><rect x="0" y="5.3" width="10.4" height="3.9" fill="#8e98bc"/><path d="M14.4 4V12L10.4 8Z" fill="#dadeee" stroke="#8890b0" stroke-width="0.9" stroke-linejoin="round"/></svg>
<div style="left:788px;top:291px;width:1px;height:16px;background:#9c9ca6"></div>
<div style="left:789px;top:291px;width:1px;height:16px;background:#fbfbfd"></div>
<svg width="16" height="16" viewBox="0 0 16 16" style="left:796px;top:291px"><rect x="0.6" y="2" width="3.2" height="12.4" fill="#c8c8c8"/><rect x="10.2" y="2" width="3.4" height="12.4" fill="#c8c8c8"/><rect x="3.8" y="2" width="1.2" height="12.4" fill="#fff"/><rect x="8.8" y="2" width="1.4" height="12.4" fill="#fff"/><path d="M0.4 1.2V15.2M13.8 1.2V15.2" stroke="#4e4e4e" stroke-width="0.9"/><path d="M0 1.8H3.8M10.2 1.8H14.2M0 14.6H3.8M10.2 14.6H14.2" stroke="#4e4e4e" stroke-width="1.3"/><rect x="5.2" y="1.3" width="3.4" height="13.8" fill="#12e024" stroke="#0a9a16" stroke-width="0.7"/></svg>
<svg width="16" height="16" viewBox="0 0 16 16" style="left:819px;top:291px"><rect x="0" y="2" width="13.2" height="12.6" fill="#c8c8c8"/><path d="M4.6 2.6V14M9.2 2.6V14M0.6 6.9H12.8M0.6 10.4H12.8" stroke="#fff" stroke-width="1.1"/><path d="M-0.4 2H4M-0.4 14.6H13.4" stroke="#525252" stroke-width="1.3"/><path d="M0 1.4V15.2M13 2.8V15.2" stroke="#525252" stroke-width="0.9"/><path d="M3.4 0.2H15V4.2H9.2L8.4 6.4L7.4 4.2H3.4Z" fill="#f2d444" stroke="#b0921a" stroke-width="0.8" stroke-linejoin="round"/><path d="M6.4 2.3h1.1M8.7 2.3h1.1M11 2.3h1.1" stroke="#6a5c1c" stroke-width="1.1"/></svg>
<svg width="16" height="16" viewBox="0 0 16 16" style="left:842px;top:291px"><path d="M1.6 3.5H-0.4V13.2H1.6M-0.4 8.6H2.4" fill="none" stroke="#4a7a6a" stroke-width="0.9"/><rect x="1.4" y="2" width="3.4" height="3" rx="0.2" fill="#f2faff" stroke="#1a90e8" stroke-width="0.9"/><rect x="6.6" y="2" width="3.4" height="3" rx="0.2" fill="#f2faff" stroke="#1a90e8" stroke-width="0.9"/><path d="M4.8 3.5H6.6M4.8 13.1H6.6" stroke="#4a7a6a" stroke-width="0.8"/><rect x="2.4" y="7.4" width="7.2" height="2.4" fill="#b4b4b4" stroke="#585858" stroke-width="0.9"/><path d="M13 7.2V10L11 8.6Z" fill="#333" stroke="#333" stroke-width="0.4"/><rect x="1.4" y="11.6" width="3.4" height="3" rx="0.2" fill="#f4fbee" stroke="#3aa020" stroke-width="0.9"/><rect x="6.6" y="11.6" width="3.4" height="3" rx="0.2" fill="#f4fbee" stroke="#3aa020" stroke-width="0.9"/></svg>
<svg width="16" height="16" viewBox="0 0 16 16" style="left:865px;top:291px"><rect x="0.2" y="2" width="12.4" height="12.4" fill="#fff"/><path d="M0.6 2V14.4M12.2 2V14.4" stroke="#b0b0b0" stroke-width="0.7"/><path d="M0 1.9H12.8" stroke="#4e4e4e" stroke-width="1.5"/><path d="M0 3H12.8" stroke="#a8a8a8" stroke-width="0.6"/><path d="M0 14.6H12.8" stroke="#4e4e4e" stroke-width="1.5"/><path d="M1.2 6.4H11.6" stroke="#1a1a3a" stroke-width="1.9" stroke-dasharray="1.3 0.8"/><path d="M3 6.4H9.8" stroke="#fff" stroke-width="0.7" stroke-dasharray="1 1.1"/><rect x="1.2" y="9.9" width="10.4" height="2.4" rx="0.8" fill="#2a92ea"/><path d="M2 11.1H10.8" stroke="#7cc4f8" stroke-width="0.7"/></svg>
<div style="left:0px;top:312px;width:1198px;height:34px;background:#e9e9e9"></div>
<span class="t" style="left:4px;top:318px;color:#3c3250;letter-spacing:-0.12px;">Drag _drop column header here to group</span>
<svg width="18" height="22" viewBox="0 0 18 22" style="left:1173px;top:318px"><path d="M2.8 16.6Q9 21.4 15.2 16.6L15 18Q9 22.2 3 18Z" fill="#f6f6f6" stroke="#585858" stroke-width="1"/><path d="M1.6 5.4L3.2 17Q9 20.6 14.8 17L16.4 5.4Z" fill="#828282" stroke="#5e5e5e" stroke-width="0.9"/><path d="M4.6 8.6L5.4 17.6M6.8 9L7.3 18.4M9 9.2V18.6M11.2 9L10.7 18.4M13.4 8.6L12.6 17.6" stroke="#fbfbfb" stroke-width="1" stroke-dasharray="2.6 0.9"/><ellipse cx="9" cy="5" rx="7.5" ry="3.1" fill="#f8f8f8" stroke="#555" stroke-width="1.2"/><ellipse cx="9" cy="5.1" rx="5.5" ry="1.7" fill="#4a4a4a"/><path d="M6 3.9V6.3M8 3.6V6.6M10 3.6V6.6M12 3.9V6.3" stroke="#f4f4f4" stroke-width="0.9"/></svg>
<div style="left:0px;top:346px;width:1172px;height:1px;background:#b4b8bc"></div>
<div class="hd" style="left:0px;top:347px;width:1172px;height:21px;"></div>
<div style="left:0px;top:368px;width:1172px;height:1px;background:#b0b0b0"></div>
<div style="left:522px;top:346px;width:149px;height:22px;background:#8c7a78"></div>
<span class="t" style="left:1px;top:350px;letter-spacing:-0.4px;">Status</span>
<svg width="15" height="10" viewBox="0 0 15 10" style="left:50px;top:353px"><path d="M3.6 0H14.3L12.6 2.6L11.4 4.4L10.7 6.2L10.4 9.6H8.6L8.4 6.2L7.2 4.2L5.4 2Z" fill="#3c3c3c"/><path d="M13.4 0.6L11.2 4L10.2 6.4L10 9.2" stroke="#a8a8a8" stroke-width="0.9" fill="none"/><path d="M6 0.8L8 2.8" stroke="#fff" stroke-width="1.5" stroke-linecap="round"/><path d="M0.4 4.4L5.6 9.4M5.6 4.4L0.4 9.4" stroke="#ff0a0a" stroke-width="1.5"/></svg>
<span class="t" style="left:74px;top:350px;letter-spacing:-0.2px;">Database Title</span>
<svg width="15" height="10" viewBox="0 0 15 10" style="left:200px;top:353px"><path d="M3.6 0H14.3L12.6 2.6L11.4 4.4L10.7 6.2L10.4 9.6H8.6L8.4 6.2L7.2 4.2L5.4 2Z" fill="#3c3c3c"/><path d="M13.4 0.6L11.2 4L10.2 6.4L10 9.2" stroke="#a8a8a8" stroke-width="0.9" fill="none"/><path d="M6 0.8L8 2.8" stroke="#fff" stroke-width="1.5" stroke-linecap="round"/><path d="M0.4 4.4L5.6 9.4M5.6 4.4L0.4 9.4" stroke="#ff0a0a" stroke-width="1.5"/></svg>
<span class="t" style="left:224px;top:350px;letter-spacing:-0.44px;">Database Path</span>
<svg width="15" height="10" viewBox="0 0 15 10" style="left:350px;top:353px"><path d="M3.6 0H14.3L12.6 2.6L11.4 4.4L10.7 6.2L10.4 9.6H8.6L8.4 6.2L7.2 4.2L5.4 2Z" fill="#3c3c3c"/><path d="M13.4 0.6L11.2 4L10.2 6.4L10 9.2" stroke="#a8a8a8" stroke-width="0.9" fill="none"/><path d="M6 0.8L8 2.8" stroke="#fff" stroke-width="1.5" stroke-linecap="round"/><path d="M0.4 4.4L5.6 9.4M5.6 4.4L0.4 9.4" stroke="#ff0a0a" stroke-width="1.5"/></svg>
<span class="t" style="left:374px;top:350px;letter-spacing:-0.2px;">Database File</span>
<svg width="15" height="10" viewBox="0 0 15 10" style="left:500px;top:353px"><path d="M3.6 0H14.3L12.6 2.6L11.4 4.4L10.7 6.2L10.4 9.6H8.6L8.4 6.2L7.2 4.2L5.4 2Z" fill="#3c3c3c"/><path d="M13.4 0.6L11.2 4L10.2 6.4L10 9.2" stroke="#a8a8a8" stroke-width="0.9" fill="none"/><path d="M6 0.8L8 2.8" stroke="#fff" stroke-width="1.5" stroke-linecap="round"/><path d="M0.4 4.4L5.6 9.4M5.6 4.4L0.4 9.4" stroke="#ff0a0a" stroke-width="1.5"/></svg>
<span class="t" style="left:524px;top:350px;letter-spacing:-0.6px;">Role</span>
<svg width="15" height="10" viewBox="0 0 15 10" style="left:650px;top:353px"><path d="M3.6 0H14.3L12.6 2.6L11.4 4.4L10.7 6.2L10.4 9.6H8.6L8.4 6.2L7.2 4.2L5.4 2Z" fill="#3c3c3c"/><path d="M13.4 0.6L11.2 4L10.2 6.4L10 9.2" stroke="#a8a8a8" stroke-width="0.9" fill="none"/><path d="M6 0.8L8 2.8" stroke="#fff" stroke-width="1.5" stroke-linecap="round"/><path d="M0.4 4.4L5.6 9.4M5.6 4.4L0.4 9.4" stroke="#ff0a0a" stroke-width="1.5"/></svg>
<span class="t" style="left:674px;top:350px;letter-spacing:-0.4px;">John Doe</span>
<svg width="15" height="10" viewBox="0 0 15 10" style="left:750px;top:353px"><path d="M3.6 0H14.3L12.6 2.6L11.4 4.4L10.7 6.2L10.4 9.6H8.6L8.4 6.2L7.2 4.2L5.4 2Z" fill="#3c3c3c"/><path d="M13.4 0.6L11.2 4L10.2 6.4L10 9.2" stroke="#a8a8a8" stroke-width="0.9" fill="none"/><path d="M6 0.8L8 2.8" stroke="#fff" stroke-width="1.5" stroke-linecap="round"/><path d="M0.4 4.4L5.6 9.4M5.6 4.4L0.4 9.4" stroke="#ff0a0a" stroke-width="1.5"/></svg>
<span class="t" style="left:774px;top:350px;letter-spacing:-0.25px;">Nancy Doe</span>
<svg width="15" height="10" viewBox="0 0 15 10" style="left:850px;top:353px"><path d="M3.6 0H14.3L12.6 2.6L11.4 4.4L10.7 6.2L10.4 9.6H8.6L8.4 6.2L7.2 4.2L5.4 2Z" fill="#3c3c3c"/><path d="M13.4 0.6L11.2 4L10.2 6.4L10 9.2" stroke="#a8a8a8" stroke-width="0.9" fill="none"/><path d="M6 0.8L8 2.8" stroke="#fff" stroke-width="1.5" stroke-linecap="round"/><path d="M0.4 4.4L5.6 9.4M5.6 4.4L0.4 9.4" stroke="#ff0a0a" stroke-width="1.5"/></svg>
<div class="hsep" style="left:71px;top:349px;width:1px;height:17px;"></div>
<div class="hsep2" style="left:72px;top:349px;width:1px;height:17px;"></div>
<div class="hsep" style="left:221px;top:349px;width:1px;height:17px;"></div>
<div class="hsep2" style="left:222px;top:349px;width:1px;height:17px;"></div>
<div class="hsep" style="left:371px;top:349px;width:1px;height:17px;"></div>
<div class="hsep2" style="left:372px;top:349px;width:1px;height:17px;"></div>
<div style="left:0;top:369px;width:1172px;height:148px;overflow:hidden">
<div style="left:0px;top:0px;width:871px;height:19px;background:#b9e0fa"></div>
<div style="left:0px;top:0px;width:71px;height:19px;background:#d2eeee"></div>
<div style="left:672px;top:0px;width:99px;height:19px;background:#cfeaea"></div>
<div style="left:1px;top:1px;width:16px;height:16px;background:#fff"></div>
<svg width="16" height="16" viewBox="0 0 16 16" style="left:1px;top:1px"><path d="M4.6 2.4Q4.6 0.6 6.5 0.6Q8.4 0.6 8.4 2.4" fill="none" stroke="#7a7a7a" stroke-width="1"/><path d="M0.8 3.2Q6.5 1.6 12.2 3.2" fill="none" stroke="#6e6e6e" stroke-width="1.5"/><path d="M1.8 4.2H11.2L10.8 14.8H2.4Z" fill="#8e8e8e" stroke="#6e6e6e" stroke-width="0.8"/><path d="M4.5 5.6V13.4M6.5 5.6V13.4M8.5 5.6V12" stroke="#fafafa" stroke-width="1"/><path d="M10.9 10.6V13.6Q10.9 14.9 9.6 14.9H8" fill="none" stroke="#0a0a0a" stroke-width="1.2"/><rect x="8.6" y="12.4" width="1" height="1" fill="#0a0a0a"/></svg>
<span class="t" style="left:19px;top:3px;letter-spacing:-0.3px;">Deleted</span>
<div class="hl" style="left:0px;top:19px;width:871px;height:1px;"></div>
<span class="t" style="left:74px;top:3px;">ytestMD's Directory</span>
<span class="t" style="left:224px;top:3px;letter-spacing:0.4px;">\dbtest\</span>
<span class="t" style="left:374px;top:3px;">copynames.nsf</span>
<span class="t" style="left:524px;top:3px;letter-spacing:-0.18px;">[UserCreator]</span>
<div class="cb" style="left:716px;top:3px;"><i></i></div>
<div class="cb" style="left:816px;top:3px;"><i></i></div>
<div class="hl" style="left:0px;top:39px;width:871px;height:1px;"></div>
<span class="t" style="left:74px;top:23px;">ytestMD's Directory</span>
<span class="t" style="left:224px;top:23px;letter-spacing:0.4px;">\dbtest\</span>
<span class="t" style="left:374px;top:23px;">copynames.nsf</span>
<span class="t" style="left:524px;top:23px;letter-spacing:0.07px;">[UserModifier]</span>
<div class="cb" style="left:716px;top:23px;"><i></i><svg width="13" height="13" viewBox="0 0 13 13" style="left:-1px;top:-1px"><path d="M3.1 6.4 L5.5 9.5 L9.9 2.7" fill="none" stroke="#4a4a4a" stroke-width="2"/></svg></div>
<div class="cb" style="left:816px;top:23px;"><i></i><svg width="13" height="13" viewBox="0 0 13 13" style="left:-1px;top:-1px"><path d="M3.1 6.4 L5.5 9.5 L9.9 2.7" fill="none" stroke="#4a4a4a" stroke-width="2"/></svg></div>
<div class="hl" style="left:0px;top:59px;width:871px;height:1px;"></div>
<span class="t" style="left:74px;top:43px;">ytestMD's Directory</span>
<span class="t" style="left:224px;top:43px;letter-spacing:0.4px;">\dbtest\</span>
<span class="t" style="left:374px;top:43px;">copynames.nsf</span>
<span class="t" style="left:524px;top:43px;">[GroupCreator]</span>
<div class="cb" style="left:716px;top:43px;"><i></i></div>
<div class="cb" style="left:816px;top:43px;"><i></i><svg width="13" height="13" viewBox="0 0 13 13" style="left:-1px;top:-1px"><path d="M3.1 6.4 L5.5 9.5 L9.9 2.7" fill="none" stroke="#4a4a4a" stroke-width="2"/></svg></div>
<div class="hl" style="left:0px;top:79px;width:871px;height:1px;"></div>
<span class="t" style="left:74px;top:63px;">ytestMD's Directory</span>
<span class="t" style="left:224px;top:63px;letter-spacing:0.4px;">\dbtest\</span>
<span class="t" style="left:374px;top:63px;">copynames.nsf</span>
<span class="t" style="left:524px;top:63px;letter-spacing:0.19px;">[GroupModifier]</span>
<div class="cb" style="left:716px;top:63px;"><i></i></div>
<div class="cb" style="left:816px;top:63px;"><i></i><svg width="13" height="13" viewBox="0 0 13 13" style="left:-1px;top:-1px"><path d="M3.1 6.4 L5.5 9.5 L9.9 2.7" fill="none" stroke="#4a4a4a" stroke-width="2"/></svg></div>
<div style="left:0px;top:80px;width:71px;height:19px;background:#c8f4d0"></div>
<div style="left:522px;top:80px;width:149px;height:19px;background:#c8f4d0"></div>
<div style="left:1px;top:81px;width:16px;height:16px;background:#fff"></div>
<svg width="16" height="16" viewBox="0 0 16 16" style="left:1px;top:81px"><path d="M12.2 0.8L15 3.6L3.4 13.6L0.2 14.9L1.2 11.4Z" fill="#fcfcfc" stroke="#1a1a1a" stroke-width="0.9" stroke-linejoin="round"/><path d="M9.8 2.8L13 5.6L14.8 3.8L12 1.2Z" fill="#9a9a9a"/><path d="M12.4 1L14.8 3.4" stroke="#e8e8e8" stroke-width="1"/><path d="M0.2 14.9L0.9 12.6L2.4 14Z" fill="#111"/><path d="M2.6 12.4L12 4.4" stroke="#c8c8c8" stroke-width="0.8"/><path d="M1.2 11.4Q3 11.6 3.4 13.6" fill="none" stroke="#555" stroke-width="0.7"/></svg>
<span class="t" style="left:19px;top:83px;letter-spacing:-0.28px;">Edited</span>
<div class="hl" style="left:0px;top:99px;width:871px;height:1px;"></div>
<span class="t" style="left:74px;top:83px;">ytestMD's Directory</span>
<span class="t" style="left:224px;top:83px;letter-spacing:0.4px;">\dbtest\</span>
<span class="t" style="left:374px;top:83px;">copynames.nsf</span>
<span class="t" style="left:524px;top:83px;letter-spacing:0.08px;">[NetCreator-ren]</span>
<div class="cb" style="left:716px;top:83px;"><i></i></div>
<div class="cb" style="left:816px;top:83px;"><i></i></div>
<div class="hl" style="left:0px;top:119px;width:871px;height:1px;"></div>
<span class="t" style="left:74px;top:103px;">ytestMD's Directory</span>
<span class="t" style="left:224px;top:103px;letter-spacing:0.4px;">\dbtest\</span>
<span class="t" style="left:374px;top:103px;">copynames.nsf</span>
<span class="t" style="left:524px;top:103px;letter-spacing:0.3px;">[NetModifier]</span>
<div class="cb" style="left:716px;top:103px;"><i></i></div>
<div class="cb" style="left:816px;top:103px;"><i></i></div>
<div class="hl" style="left:0px;top:139px;width:871px;height:1px;"></div>
<span class="t" style="left:74px;top:123px;">ytestMD's Directory</span>
<span class="t" style="left:224px;top:123px;letter-spacing:0.4px;">\dbtest\</span>
<span class="t" style="left:374px;top:123px;">copynames.nsf</span>
<span class="t" style="left:524px;top:123px;letter-spacing:-0.22px;">[ServerCreator]</span>
<div class="cb" style="left:716px;top:123px;"><i></i><svg width="13" height="13" viewBox="0 0 13 13" style="left:-1px;top:-1px"><path d="M3.1 6.4 L5.5 9.5 L9.9 2.7" fill="none" stroke="#4a4a4a" stroke-width="2"/></svg></div>
<div class="cb" style="left:816px;top:123px;"><i></i><svg width="13" height="13" viewBox="0 0 13 13" style="left:-1px;top:-1px"><path d="M3.1 6.4 L5.5 9.5 L9.9 2.7" fill="none" stroke="#4a4a4a" stroke-width="2"/></svg></div>
<div class="hl" style="left:0px;top:159px;width:871px;height:1px;"></div>
<span class="t" style="left:74px;top:143px;">ytestMD's Directory</span>
<span class="t" style="left:224px;top:143px;letter-spacing:0.4px;">\dbtest\</span>
<span class="t" style="left:374px;top:143px;">copynames.nsf</span>
<span class="t" style="left:524px;top:143px;">[ServerModifier]</span>
<div class="cb" style="left:716px;top:143px;"><i></i><svg width="13" height="13" viewBox="0 0 13 13" style="left:-1px;top:-1px"><path d="M3.1 6.4 L5.5 9.5 L9.9 2.7" fill="none" stroke="#4a4a4a" stroke-width="2"/></svg></div>
<div class="cb" style="left:816px;top:143px;"><i></i><svg width="13" height="13" viewBox="0 0 13 13" style="left:-1px;top:-1px"><path d="M3.1 6.4 L5.5 9.5 L9.9 2.7" fill="none" stroke="#4a4a4a" stroke-width="2"/></svg></div>
<div class="vl" style="left:71px;top:0px;width:1px;height:160px;"></div>
<div class="vl" style="left:221px;top:0px;width:1px;height:160px;"></div>
<div class="vl" style="left:371px;top:0px;width:1px;height:160px;"></div>
<div class="vl" style="left:521px;top:0px;width:1px;height:160px;"></div>
<div class="vl" style="left:671px;top:0px;width:1px;height:160px;"></div>
<div class="vl" style="left:771px;top:0px;width:1px;height:160px;"></div>
<div class="vl" style="left:871px;top:0px;width:1px;height:160px;"></div>
</div>
<div style="left:671px;top:344px;width:101px;height:26px;border:3px solid #f5923e"></div>
<div style="left:771px;top:344px;width:101px;height:26px;border:3px solid #f5923e"></div>
<div style="left:1172px;top:347px;width:17px;height:171px;background:linear-gradient(90deg,#f0f0f0,#ffffff)"></div>
<div style="left:1173px;top:424px;width:14px;height:46px;background:linear-gradient(90deg,#f4f4f4,#e4e4e6);border:1px solid #b4b4b4;border-radius:2px"></div>
<div style="left:1178px;top:443px;width:7px;height:1px;background:#8890c8"></div>
<div style="left:1178px;top:445px;width:7px;height:1px;background:#8890c8"></div>
<div style="left:1178px;top:447px;width:7px;height:1px;background:#8890c8"></div>
<div style="left:1178px;top:449px;width:7px;height:1px;background:#8890c8"></div>
<svg width="8" height="5" viewBox="0 0 8 5" style="left:1177px;top:354px"><path d="M0 5H8L4 0Z" fill="#333"/></svg>
<svg width="8" height="5" viewBox="0 0 8 5" style="left:1177px;top:507px"><path d="M0 0H8L4 5Z" fill="#333"/></svg>
<div style="left:1189px;top:346px;width:8px;height:172px;background:linear-gradient(#f4f4f6 0,#f0f0f4 21px,#e6e6f0 21px,#e6e6f0 73px,#cdd0d2 73px);border-left:1px solid #bdbdbd;border-right:1px solid #c6c6c6"></div>
<div style="left:1190px;top:419px;width:6px;height:26px;background:linear-gradient(90deg,#e6e6e6,#d0d0d0);border:1px solid #a2a2a2;border-radius:2px"></div>
<div style="left:0px;top:518px;width:1198px;height:6px;background:#fff"></div>
<div style="left:0px;top:524px;width:1198px;height:1px;background:#b8b8bc"></div>
<div style="left:0px;top:525px;width:1198px;height:26px;background:#e1e2ec"></div>
<div style="left:0px;top:551px;width:1198px;height:2px;background:#70707c"></div>
<span class="t" style="left:8px;top:530px;color:#2a2a3a;letter-spacing:0.3px;">Output</span>
<div style="left:52px;top:526px;width:1px;height:22px;background:#c4c4cc"></div>
<span class="t" style="left:59px;top:530px;color:#2a2a3a;">Attributes</span>
<div style="left:117px;top:526px;width:1px;height:22px;background:#c4c4cc"></div>
<span class="t" style="left:124px;top:530px;color:#2a2a3a;letter-spacing:-0.37px;">ACL Entry Presence</span>
<div style="left:232px;top:526px;width:1px;height:22px;background:#c4c4cc"></div>
<span class="t" style="left:280px;top:530px;color:#2a2a3a;letter-spacing:-0.19px;">Global ACL Properties</span>
<div style="left:401px;top:526px;width:1px;height:22px;background:#c4c4cc"></div>
<span class="t" style="left:408px;top:530px;color:#2a2a3a;letter-spacing:-0.38px;">Selected ACLs</span>
<div style="left:488px;top:526px;width:1px;height:22px;background:#c4c4cc"></div>
<span class="t" style="left:495px;top:530px;color:#2a2a3a;letter-spacing:-0.24px;">Effective Access</span>
<div style="left:585px;top:526px;width:1px;height:22px;background:#c4c4cc"></div>
<div style="left:234px;top:524px;width:38px;height:26px;background:#fff;border:1px solid #a9a9b3;border-top:none;border-radius:0 0 3px 3px;box-shadow:1px 1px 0 #c4c4cc"></div>
<span class="t" style="left:239px;top:530px;color:#2a2a3a;letter-spacing:-0.6px;">Roles</span>
</body></html>
